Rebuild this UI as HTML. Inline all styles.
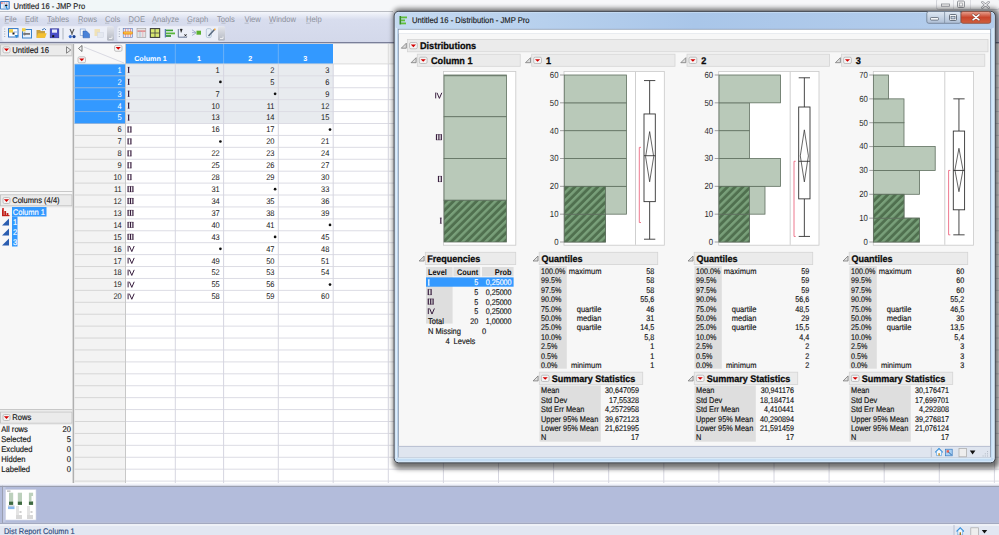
<!DOCTYPE html>
<html><head><meta charset="utf-8"><style>
html,body{margin:0;padding:0;width:999px;height:535px;overflow:hidden;background:#fff}
svg{display:block;font-family:"Liberation Sans",sans-serif;text-rendering:geometricPrecision}
</style></head><body>
<svg width="999" height="535" viewBox="0 0 999 535">
<defs>
<pattern id="hatch" patternUnits="userSpaceOnUse" width="5.4" height="5.4" patternTransform="rotate(45)"><rect width="5.4" height="5.4" fill="#50704f"/><rect x="0" y="0" width="2.5" height="5.4" fill="#79a07a"/></pattern>
<linearGradient id="menubg" x1="0" y1="0" x2="0" y2="1"><stop offset="0" stop-color="#f4f6fb"/><stop offset="0.25" stop-color="#d8ddee"/><stop offset="1" stop-color="#d3d8ea"/></linearGradient>
<linearGradient id="dtitle" x1="0" y1="0" x2="1" y2="0"><stop offset="0" stop-color="#c5daf1"/><stop offset="0.5" stop-color="#a9c6e9"/><stop offset="1" stop-color="#b4cdec"/></linearGradient>
<linearGradient id="closebtn" x1="0" y1="0" x2="0" y2="1"><stop offset="0" stop-color="#e8a493"/><stop offset="0.5" stop-color="#c9452c"/><stop offset="1" stop-color="#d0603f"/></linearGradient>
<linearGradient id="btnbg" x1="0" y1="0" x2="0" y2="1"><stop offset="0" stop-color="#dfe8f3"/><stop offset="1" stop-color="#aebfd6"/></linearGradient>
<filter id="shadow" x="-5%" y="-5%" width="110%" height="110%"><feGaussianBlur stdDeviation="2.5"/></filter>
</defs>
<rect x="0" y="0" width="999" height="535" fill="#ffffff"/>
<rect x="0" y="0" width="999" height="12" fill="#f6f7f9"/>
<rect x="40" y="0" width="120" height="12" fill="#eef6f7" opacity="0.6"/>
<rect x="0" y="1" width="9.8" height="8.6" rx="1" fill="#3f7fc8"/>
<rect x="1" y="2" width="7.6" height="6.6" fill="#dce8f6"/>
<rect x="1.2" y="2.3" width="1.4" height="1.4" fill="#f05a50"/>
<rect x="3.6" y="2.3" width="1.4" height="1.4" fill="#e8a0a8"/>
<rect x="6" y="2.3" width="1.4" height="1.4" fill="#d8b0c8"/>
<rect x="1.2" y="4.6" width="1.4" height="3.6" fill="#f0f4fa"/>
<rect x="3.6" y="4.6" width="1.4" height="3.6" fill="#b8d0ec"/>
<ellipse cx="6.2" cy="5.3" rx="1.3" ry="0.9" fill="#111"/>
<path d="M5 6.5 l2 -0.5 l0.7 4.2 z" fill="#1a8ad8"/>
<text transform="translate(13.5,9.3) scale(0.91,1)" font-size="8.305" fill="#1e1e1e" stroke="#1e1e1e" stroke-width="0.16" text-anchor="start">Untitled 16 - JMP Pro</text>
<rect x="936.5" y="-1" width="63" height="10.5" fill="#f4f5f7" stroke="#c9ccd2" stroke-width="0.8" rx="2"/>
<line x1="953.5" y1="0" x2="953.5" y2="9.5" stroke="#d4d6da" stroke-width="0.8"/>
<line x1="970.5" y1="0" x2="970.5" y2="9.5" stroke="#d4d6da" stroke-width="0.8"/>
<rect x="941.5" y="4" width="8" height="2.2" fill="#fafafa" stroke="#8a8d93" stroke-width="0.8"/>
<rect x="957.5" y="1" width="7" height="6.5" fill="#f0f0f0" stroke="#8a8d93" stroke-width="0.9" rx="1"/>
<rect x="959.5" y="3" width="3" height="3" fill="#fafafa" stroke="#8a8d93" stroke-width="0.6"/>
<path d="M982.3 2.2 L988.7 7.6 M988.7 2.2 L982.3 7.6" stroke="#8a8c92" stroke-width="2.4" stroke-linecap="round"/>
<path d="M982.3 2.2 L988.7 7.6 M988.7 2.2 L982.3 7.6" stroke="#f4f4f6" stroke-width="1.1" stroke-linecap="round"/>
<line x1="0" y1="11.5" x2="393" y2="11.5" stroke="#b9bcc3" stroke-width="1"/>
<rect x="0" y="12" width="999" height="30.5" fill="url(#menubg)"/>
<text transform="translate(4.5,21.6) scale(0.91,1)" font-size="8.36" fill="#8e929c" text-anchor="start">File</text>
<line x1="4.5" y1="23.2" x2="8.8" y2="23.2" stroke="#a0a4ae" stroke-width="0.6"/>
<text transform="translate(25,21.6) scale(0.91,1)" font-size="8.36" fill="#8e929c" text-anchor="start">Edit</text>
<line x1="25" y1="23.2" x2="29.3" y2="23.2" stroke="#a0a4ae" stroke-width="0.6"/>
<text transform="translate(47,21.6) scale(0.91,1)" font-size="8.36" fill="#8e929c" text-anchor="start">Tables</text>
<line x1="47" y1="23.2" x2="51.3" y2="23.2" stroke="#a0a4ae" stroke-width="0.6"/>
<text transform="translate(78,21.6) scale(0.91,1)" font-size="8.36" fill="#8e929c" text-anchor="start">Rows</text>
<line x1="78" y1="23.2" x2="82.3" y2="23.2" stroke="#a0a4ae" stroke-width="0.6"/>
<text transform="translate(105,21.6) scale(0.91,1)" font-size="8.36" fill="#8e929c" text-anchor="start">Cols</text>
<line x1="105" y1="23.2" x2="109.3" y2="23.2" stroke="#a0a4ae" stroke-width="0.6"/>
<text transform="translate(128.5,21.6) scale(0.91,1)" font-size="8.36" fill="#8e929c" text-anchor="start">DOE</text>
<line x1="128.5" y1="23.2" x2="132.8" y2="23.2" stroke="#a0a4ae" stroke-width="0.6"/>
<text transform="translate(152,21.6) scale(0.91,1)" font-size="8.36" fill="#8e929c" text-anchor="start">Analyze</text>
<line x1="152" y1="23.2" x2="156.3" y2="23.2" stroke="#a0a4ae" stroke-width="0.6"/>
<text transform="translate(187,21.6) scale(0.91,1)" font-size="8.36" fill="#8e929c" text-anchor="start">Graph</text>
<line x1="187" y1="23.2" x2="191.3" y2="23.2" stroke="#a0a4ae" stroke-width="0.6"/>
<text transform="translate(217,21.6) scale(0.91,1)" font-size="8.36" fill="#8e929c" text-anchor="start">Tools</text>
<line x1="221.4" y1="23.2" x2="225.6" y2="23.2" stroke="#a0a4ae" stroke-width="0.6"/>
<text transform="translate(244.5,21.6) scale(0.91,1)" font-size="8.36" fill="#8e929c" text-anchor="start">View</text>
<line x1="244.5" y1="23.2" x2="248.8" y2="23.2" stroke="#a0a4ae" stroke-width="0.6"/>
<text transform="translate(269,21.6) scale(0.91,1)" font-size="8.36" fill="#8e929c" text-anchor="start">Window</text>
<line x1="269" y1="23.2" x2="273.3" y2="23.2" stroke="#a0a4ae" stroke-width="0.6"/>
<text transform="translate(306,21.6) scale(0.91,1)" font-size="8.36" fill="#8e929c" text-anchor="start">Help</text>
<line x1="306" y1="23.2" x2="310.3" y2="23.2" stroke="#a0a4ae" stroke-width="0.6"/>
<linearGradient id="ovf" x1="0" y1="0" x2="0" y2="1"><stop offset="0" stop-color="#e4e6ec"/><stop offset="1" stop-color="#b4b8c2"/></linearGradient>
<rect x="1.8" y="25.9" width="112" height="15.3" rx="2.5" fill="#eceff8" stroke="#dde1ee" stroke-width="0.6"/>
<rect x="117" y="25.9" width="108" height="15.3" rx="2.5" fill="#eceff8" stroke="#dde1ee" stroke-width="0.6"/>
<rect x="4.2" y="28.5" width="1" height="1" fill="#a4aab8"/>
<rect x="4.2" y="31" width="1" height="1" fill="#a4aab8"/>
<rect x="4.2" y="33.5" width="1" height="1" fill="#a4aab8"/>
<rect x="4.2" y="36" width="1" height="1" fill="#a4aab8"/>
<rect x="118.8" y="28.5" width="1" height="1" fill="#a4aab8"/>
<rect x="118.8" y="31" width="1" height="1" fill="#a4aab8"/>
<rect x="118.8" y="33.5" width="1" height="1" fill="#a4aab8"/>
<rect x="118.8" y="36" width="1" height="1" fill="#a4aab8"/>
<rect x="107" y="26.2" width="7" height="14.6" rx="1.5" fill="url(#ovf)"/>
<path d="M109 38.5 l3 0 l0 -2" stroke="#f4f4f4" stroke-width="0.9" fill="none"/>
<rect x="218" y="26.2" width="7" height="14.6" rx="1.5" fill="url(#ovf)"/>
<path d="M220 38.5 l3 0 l0 -2" stroke="#f4f4f4" stroke-width="0.9" fill="none"/>
<rect x="8.5" y="28.6" width="9.5" height="8.4" fill="#ffffff" stroke="#2f74c4" stroke-width="1"/>
<rect x="9" y="29.2" width="4" height="3.4" fill="#f0d048"/>
<rect x="13.5" y="31" width="3.5" height="2" fill="#c8d8f0"/>
<rect x="12.5" y="32.5" width="2" height="2" fill="#222"/>
<path d="M14.5 35 l2 3 l2 -3 z" fill="#2a8ad4"/>
<rect x="22.5" y="29.5" width="9" height="8.5" fill="#eaf2fb" stroke="#3a82c8" stroke-width="1"/>
<rect x="22" y="28.2" width="3.6" height="3.2" fill="#f0d048"/>
<rect x="24" y="33" width="6" height="1.8" fill="#777"/>
<circle cx="24.5" cy="34" r="1.4" fill="#777"/>
<path d="M36.5 30 h3.5 l1 1 h4 v6.8 h-8.5 z" fill="#c8a040"/>
<path d="M36.5 37.8 l1.6 -4.6 h8.6 l-1.6 4.6 z" fill="#f4c030"/>
<path d="M42 30 l2.5 -1.5 l1.5 1.5" stroke="#3a6fb0" stroke-width="1" fill="none"/>
<rect x="50.2" y="28.8" width="8.6" height="9" fill="#4a4ec8" stroke="#2a2e90" stroke-width="0.6"/>
<rect x="52" y="29.5" width="5" height="3.2" fill="#e8eaf8"/>
<rect x="52.2" y="35.2" width="2" height="2" fill="#111"/>
<line x1="63" y1="28" x2="63" y2="39.5" stroke="#b7bcc8" stroke-width="1.2"/>
<path d="M70 29 L72.5 34.5 M74 29 L71.5 34.5" stroke="#555" stroke-width="1.1" fill="none"/>
<circle cx="70.3" cy="36.6" r="1.6" fill="#3a6fd0"/><circle cx="74" cy="36.6" r="1.6" fill="#1a3f90"/>
<rect x="80.2" y="29" width="5" height="6.5" fill="#f4f8fc" stroke="#7a9ad0" stroke-width="0.6"/>
<path d="M83 31 h3.5 l3 3 v3.8 h-6.5 z" fill="#4a82d8" stroke="#2a5aa8" stroke-width="0.5"/>
<rect x="94.5" y="29" width="5.5" height="7" fill="#f0e2b8"/>
<rect x="97.5" y="32.5" width="6" height="5" fill="#e4e8f0" stroke="#d0d6e2" stroke-width="0.5"/>
<rect x="123.2" y="28.3" width="9.2" height="9" fill="#dfe8f6" stroke="#5a78b8" stroke-width="0.6"/>
<line x1="125.5" y1="28.5" x2="125.5" y2="37" stroke="#e05050" stroke-width="0.5"/>
<line x1="128.0" y1="28.5" x2="128.0" y2="37" stroke="#e05050" stroke-width="0.5"/>
<line x1="130.5" y1="28.5" x2="130.5" y2="37" stroke="#e05050" stroke-width="0.5"/>
<rect x="122.8" y="31.5" width="10" height="3" rx="1.4" fill="#f08a10"/>
<rect x="124" y="32.3" width="8" height="1.2" fill="#f8d050"/>
<rect x="137" y="28.5" width="8.8" height="9" fill="#e4e4e4" stroke="#9a9a9a" stroke-width="0.6"/>
<rect x="137.5" y="30.5" width="8" height="1.2" fill="#e07070"/>
<line x1="140" y1="31" x2="140" y2="37" stroke="#8ab0d8" stroke-width="0.6"/>
<line x1="142.8" y1="31" x2="142.8" y2="37" stroke="#e8a0b0" stroke-width="0.6"/>
<rect x="150.3" y="28.6" width="9.4" height="8.8" fill="#d8e870" stroke="#333" stroke-width="1"/>
<line x1="155" y1="28.6" x2="155" y2="37.4" stroke="#444" stroke-width="0.8"/>
<line x1="150.3" y1="33" x2="159.7" y2="33" stroke="#444" stroke-width="0.8"/>
<rect x="164.8" y="29" width="1" height="8.5" fill="#3a62a0"/>
<rect x="166" y="29.6" width="7" height="1.6" fill="#3aa030"/>
<rect x="166" y="32.5" width="9" height="1.8" fill="#5ab83a"/>
<rect x="166" y="35.2" width="5" height="1.6" fill="#2a8a2a"/>
<path d="M178.3 29 V37.2 H187" stroke="#5a6a8a" stroke-width="0.9" fill="none"/>
<path d="M180.2 29.3 h2 l-1 2 z M181.2 31 v1.5" stroke="#111" stroke-width="0.7" fill="#111"/>
<path d="M184.5 34.3 l2 2 M186.5 34.3 l-2 2" stroke="#111" stroke-width="0.9"/>
<path d="M192 29.8 L196 32.5 M192 35.5 L196 33 M192 32.6 H196" stroke="#8a9ac0" stroke-width="0.7"/>
<rect x="196.5" y="30.7" width="4.5" height="4" fill="#5ab030"/>
<rect x="206.3" y="28.6" width="5" height="9" rx="1.5" fill="#e8eef6" stroke="#9ab0c8" stroke-width="0.6"/>
<path d="M208.5 36 L214.5 29.5" stroke="#5a6a80" stroke-width="1.5"/>
<rect x="214" y="28.6" width="1.6" height="1.6" fill="#f0a030"/>
<line x1="0" y1="42.5" x2="999" y2="42.5" stroke="#7a7f99" stroke-width="1"/>
<rect x="0" y="43" width="999" height="1.2" fill="#c9ccd6"/>
<rect x="0" y="44" width="72.5" height="439" fill="#f7f7f7"/>
<rect x="0.4" y="44.8" width="71.6" height="10.6" fill="#ebebeb" stroke="#bdbdbd" stroke-width="0.8"/>
<line x1="0" y1="56" x2="72.4" y2="56" stroke="#d4d4d4" stroke-width="1"/>
<rect x="3.0" y="46.8" width="7" height="6" fill="#f4f4f4" stroke="#b4b4b4" stroke-width="0.8" rx="1.5"/>
<path d="M3.9 48.599999999999994 L9.1 48.599999999999994 L6.5 51.3 Z" fill="#d40000"/>
<text transform="translate(12.2,52.8) scale(0.91,1)" font-size="8.47" fill="#161616" stroke="#161616" stroke-width="0.16" text-anchor="start">Untitled 16</text>
<path d="M66.5 46.8 L70.8 50 L66.5 53.2 Z" fill="none" stroke="#6a6a6a" stroke-width="0.8"/>
<line x1="0" y1="191.5" x2="72.5" y2="191.5" stroke="#c8c8c8" stroke-width="1.2"/>
<rect x="0.4" y="194.8" width="71.6" height="11" fill="#ebebeb" stroke="#bdbdbd" stroke-width="0.8"/>
<line x1="0" y1="206.8" x2="72.4" y2="206.8" stroke="#dcdcdc" stroke-width="0.8"/>
<rect x="3.0" y="197.5" width="7" height="6" fill="#f4f4f4" stroke="#b4b4b4" stroke-width="0.8" rx="1.5"/>
<path d="M3.9 199.3 L9.1 199.3 L6.5 202.0 Z" fill="#d40000"/>
<text transform="translate(12.2,202.8) scale(0.91,1)" font-size="8.305" fill="#161616" stroke="#161616" stroke-width="0.16" text-anchor="start">Columns (4/4)</text>
<rect x="12" y="207" width="34.5" height="9.5" fill="#3399ff"/>
<rect x="12" y="216.5" width="5.5" height="30" fill="#3399ff"/>
<text transform="translate(12.8,214.8) scale(0.91,1)" font-size="8.25" fill="#ffffff" stroke="#ffffff" stroke-width="0.16" text-anchor="start">Column 1</text>
<text transform="translate(13.0,224.6) scale(0.91,1)" font-size="8.25" fill="#ffffff" stroke="#ffffff" stroke-width="0.16" text-anchor="start">1</text>
<text transform="translate(13.0,234.54999999999998) scale(0.91,1)" font-size="8.25" fill="#ffffff" stroke="#ffffff" stroke-width="0.16" text-anchor="start">2</text>
<text transform="translate(13.0,244.5) scale(0.91,1)" font-size="8.25" fill="#ffffff" stroke="#ffffff" stroke-width="0.16" text-anchor="start">3</text>
<rect x="2" y="208" width="1.8" height="8" fill="#c0201a"/>
<rect x="4.3" y="211" width="1.8" height="5" fill="#c0201a"/>
<rect x="6.6" y="213" width="1.8" height="3" fill="#c0201a"/>
<rect x="2" y="215" width="7.5" height="1.2" fill="#c0201a"/>
<rect x="2" y="208" width="1.6" height="1.6" fill="#e05050"/>
<path d="M2 225.5 L9 218.5 L9 225.5 Z" fill="#2a5db0"/>
<path d="M2 235.5 L9 228.5 L9 235.5 Z" fill="#2a5db0"/>
<path d="M2 245.5 L9 238.5 L9 245.5 Z" fill="#2a5db0"/>
<line x1="0" y1="409.7" x2="72.5" y2="409.7" stroke="#c8c8c8" stroke-width="1.2"/>
<rect x="0.4" y="412" width="71.6" height="11.2" fill="#ebebeb" stroke="#bdbdbd" stroke-width="0.8"/>
<line x1="0" y1="424" x2="72.4" y2="424" stroke="#dcdcdc" stroke-width="0.8"/>
<rect x="3.0" y="414.5" width="7" height="6" fill="#f4f4f4" stroke="#b4b4b4" stroke-width="0.8" rx="1.5"/>
<path d="M3.9 416.3 L9.1 416.3 L6.5 419.0 Z" fill="#d40000"/>
<text transform="translate(12.2,420.2) scale(0.91,1)" font-size="8.36" fill="#161616" stroke="#161616" stroke-width="0.16" text-anchor="start">Rows</text>
<text transform="translate(1.3,432.0) scale(0.91,1)" font-size="8.36" fill="#161616" stroke="#161616" stroke-width="0.16" text-anchor="start">All rows</text>
<text transform="translate(70.9,432.0) scale(0.91,1)" font-size="8.36" fill="#161616" stroke="#161616" stroke-width="0.16" text-anchor="end">20</text>
<text transform="translate(1.3,442.0) scale(0.91,1)" font-size="8.36" fill="#161616" stroke="#161616" stroke-width="0.16" text-anchor="start">Selected</text>
<text transform="translate(70.9,442.0) scale(0.91,1)" font-size="8.36" fill="#161616" stroke="#161616" stroke-width="0.16" text-anchor="end">5</text>
<text transform="translate(1.3,452.0) scale(0.91,1)" font-size="8.36" fill="#161616" stroke="#161616" stroke-width="0.16" text-anchor="start">Excluded</text>
<text transform="translate(70.9,452.0) scale(0.91,1)" font-size="8.36" fill="#161616" stroke="#161616" stroke-width="0.16" text-anchor="end">0</text>
<text transform="translate(1.3,462.0) scale(0.91,1)" font-size="8.36" fill="#161616" stroke="#161616" stroke-width="0.16" text-anchor="start">Hidden</text>
<text transform="translate(70.9,462.0) scale(0.91,1)" font-size="8.36" fill="#161616" stroke="#161616" stroke-width="0.16" text-anchor="end">0</text>
<text transform="translate(1.3,472.0) scale(0.91,1)" font-size="8.36" fill="#161616" stroke="#161616" stroke-width="0.16" text-anchor="start">Labelled</text>
<text transform="translate(70.9,472.0) scale(0.91,1)" font-size="8.36" fill="#161616" stroke="#161616" stroke-width="0.16" text-anchor="end">0</text>
<rect x="72.4" y="44" width="2.3" height="439" fill="#c4c4c4"/>
<line x1="73.6" y1="44" x2="73.6" y2="483" stroke="#a8a8a8" stroke-width="0.8"/>
<rect x="74.6" y="44" width="924.4" height="439" fill="#ffffff"/>
<rect x="74.6" y="44" width="50.900000000000006" height="439" fill="#f3f3f3"/>
<rect x="74.6" y="44" width="50.900000000000006" height="20" fill="#f8f8f8"/>
<line x1="84" y1="47" x2="124" y2="63" stroke="#d0d0dc" stroke-width="0.8"/>
<path d="M82 45.5 L78.5 48.5 L82 51.5 Z" fill="none" stroke="#555" stroke-width="0.8"/>
<rect x="114.5" y="45.3" width="7.5" height="6" fill="#f4f4f4" stroke="#b4b4b4" stroke-width="0.8" rx="1.5"/>
<path d="M115.65 47.099999999999994 L120.85 47.099999999999994 L118.25 49.8 Z" fill="#d40000"/>
<rect x="78.0" y="56.8" width="7.5" height="6" fill="#f4f4f4" stroke="#b4b4b4" stroke-width="0.8" rx="1.5"/>
<path d="M79.15 58.599999999999994 L84.35 58.599999999999994 L81.75 61.3 Z" fill="#d40000"/>
<rect x="125.5" y="44" width="207.5" height="20" fill="#3399ff"/>
<line x1="175.3" y1="44" x2="175.3" y2="64" stroke="#7ab8f5" stroke-width="0.8"/>
<line x1="223.6" y1="44" x2="223.6" y2="64" stroke="#7ab8f5" stroke-width="0.8"/>
<line x1="278.3" y1="44" x2="278.3" y2="64" stroke="#7ab8f5" stroke-width="0.8"/>
<text transform="translate(150.5,61.3) scale(1.0,1)" font-size="7.2" font-weight="bold" fill="#ffffff" text-anchor="middle">Column 1</text>
<text transform="translate(198.9,61.3) scale(1.0,1)" font-size="7.2" font-weight="bold" fill="#ffffff" text-anchor="middle">1</text>
<text transform="translate(250.3,61.3) scale(1.0,1)" font-size="7.2" font-weight="bold" fill="#ffffff" text-anchor="middle">2</text>
<text transform="translate(305.3,61.3) scale(1.0,1)" font-size="7.2" font-weight="bold" fill="#ffffff" text-anchor="middle">3</text>
<rect x="333.2" y="44" width="665.8" height="20" fill="#f6f6f6"/>
<rect x="125.5" y="64.0" width="207.7" height="59.6" fill="#e8ebef"/>
<rect x="74.6" y="64.0" width="50.900000000000006" height="59.6" fill="#3399ff"/>
<line x1="74.6" y1="75.82000000000001" x2="125.5" y2="75.82000000000001" stroke="#8fb3dd" stroke-width="1"/>
<line x1="125.5" y1="75.82000000000001" x2="999" y2="75.82000000000001" stroke="#dcdce4" stroke-width="1"/>
<line x1="74.6" y1="87.74000000000001" x2="125.5" y2="87.74000000000001" stroke="#8fb3dd" stroke-width="1"/>
<line x1="125.5" y1="87.74000000000001" x2="999" y2="87.74000000000001" stroke="#dcdce4" stroke-width="1"/>
<line x1="74.6" y1="99.66" x2="125.5" y2="99.66" stroke="#8fb3dd" stroke-width="1"/>
<line x1="125.5" y1="99.66" x2="999" y2="99.66" stroke="#dcdce4" stroke-width="1"/>
<line x1="74.6" y1="111.58000000000001" x2="125.5" y2="111.58000000000001" stroke="#8fb3dd" stroke-width="1"/>
<line x1="125.5" y1="111.58000000000001" x2="999" y2="111.58000000000001" stroke="#dcdce4" stroke-width="1"/>
<line x1="74.6" y1="123.5" x2="125.5" y2="123.5" stroke="#8fb3dd" stroke-width="1"/>
<line x1="125.5" y1="123.5" x2="999" y2="123.5" stroke="#dcdce4" stroke-width="1"/>
<line x1="74.6" y1="135.42" x2="125.5" y2="135.42" stroke="#d6d6d6" stroke-width="1"/>
<line x1="125.5" y1="135.42" x2="999" y2="135.42" stroke="#dcdce4" stroke-width="1"/>
<line x1="74.6" y1="147.34" x2="125.5" y2="147.34" stroke="#d6d6d6" stroke-width="1"/>
<line x1="125.5" y1="147.34" x2="999" y2="147.34" stroke="#dcdce4" stroke-width="1"/>
<line x1="74.6" y1="159.26000000000002" x2="125.5" y2="159.26000000000002" stroke="#d6d6d6" stroke-width="1"/>
<line x1="125.5" y1="159.26000000000002" x2="999" y2="159.26000000000002" stroke="#dcdce4" stroke-width="1"/>
<line x1="74.6" y1="171.18" x2="125.5" y2="171.18" stroke="#d6d6d6" stroke-width="1"/>
<line x1="125.5" y1="171.18" x2="999" y2="171.18" stroke="#dcdce4" stroke-width="1"/>
<line x1="74.6" y1="183.1" x2="125.5" y2="183.1" stroke="#d6d6d6" stroke-width="1"/>
<line x1="125.5" y1="183.1" x2="999" y2="183.1" stroke="#dcdce4" stroke-width="1"/>
<line x1="74.6" y1="195.02" x2="125.5" y2="195.02" stroke="#d6d6d6" stroke-width="1"/>
<line x1="125.5" y1="195.02" x2="999" y2="195.02" stroke="#dcdce4" stroke-width="1"/>
<line x1="74.6" y1="206.94" x2="125.5" y2="206.94" stroke="#d6d6d6" stroke-width="1"/>
<line x1="125.5" y1="206.94" x2="999" y2="206.94" stroke="#dcdce4" stroke-width="1"/>
<line x1="74.6" y1="218.86" x2="125.5" y2="218.86" stroke="#d6d6d6" stroke-width="1"/>
<line x1="125.5" y1="218.86" x2="999" y2="218.86" stroke="#dcdce4" stroke-width="1"/>
<line x1="74.6" y1="230.78" x2="125.5" y2="230.78" stroke="#d6d6d6" stroke-width="1"/>
<line x1="125.5" y1="230.78" x2="999" y2="230.78" stroke="#dcdce4" stroke-width="1"/>
<line x1="74.6" y1="242.70000000000002" x2="125.5" y2="242.70000000000002" stroke="#d6d6d6" stroke-width="1"/>
<line x1="125.5" y1="242.70000000000002" x2="999" y2="242.70000000000002" stroke="#dcdce4" stroke-width="1"/>
<line x1="74.6" y1="254.62" x2="125.5" y2="254.62" stroke="#d6d6d6" stroke-width="1"/>
<line x1="125.5" y1="254.62" x2="999" y2="254.62" stroke="#dcdce4" stroke-width="1"/>
<line x1="74.6" y1="266.53999999999996" x2="125.5" y2="266.53999999999996" stroke="#d6d6d6" stroke-width="1"/>
<line x1="125.5" y1="266.53999999999996" x2="999" y2="266.53999999999996" stroke="#dcdce4" stroke-width="1"/>
<line x1="74.6" y1="278.46" x2="125.5" y2="278.46" stroke="#d6d6d6" stroke-width="1"/>
<line x1="125.5" y1="278.46" x2="999" y2="278.46" stroke="#dcdce4" stroke-width="1"/>
<line x1="74.6" y1="290.38" x2="125.5" y2="290.38" stroke="#d6d6d6" stroke-width="1"/>
<line x1="125.5" y1="290.38" x2="999" y2="290.38" stroke="#dcdce4" stroke-width="1"/>
<line x1="74.6" y1="302.29999999999995" x2="125.5" y2="302.29999999999995" stroke="#d6d6d6" stroke-width="1"/>
<line x1="125.5" y1="302.29999999999995" x2="999" y2="302.29999999999995" stroke="#dcdce4" stroke-width="1"/>
<line x1="74.6" y1="314.21999999999997" x2="125.5" y2="314.21999999999997" stroke="#d6d6d6" stroke-width="1"/>
<line x1="125.5" y1="314.21999999999997" x2="999" y2="314.21999999999997" stroke="#dcdce4" stroke-width="1"/>
<line x1="74.6" y1="326.14" x2="125.5" y2="326.14" stroke="#d6d6d6" stroke-width="1"/>
<line x1="125.5" y1="326.14" x2="999" y2="326.14" stroke="#dcdce4" stroke-width="1"/>
<line x1="74.6" y1="338.06" x2="125.5" y2="338.06" stroke="#d6d6d6" stroke-width="1"/>
<line x1="125.5" y1="338.06" x2="999" y2="338.06" stroke="#dcdce4" stroke-width="1"/>
<line x1="74.6" y1="349.97999999999996" x2="125.5" y2="349.97999999999996" stroke="#d6d6d6" stroke-width="1"/>
<line x1="125.5" y1="349.97999999999996" x2="999" y2="349.97999999999996" stroke="#dcdce4" stroke-width="1"/>
<line x1="74.6" y1="361.9" x2="125.5" y2="361.9" stroke="#d6d6d6" stroke-width="1"/>
<line x1="125.5" y1="361.9" x2="999" y2="361.9" stroke="#dcdce4" stroke-width="1"/>
<line x1="74.6" y1="373.82" x2="125.5" y2="373.82" stroke="#d6d6d6" stroke-width="1"/>
<line x1="125.5" y1="373.82" x2="999" y2="373.82" stroke="#dcdce4" stroke-width="1"/>
<line x1="74.6" y1="385.73999999999995" x2="125.5" y2="385.73999999999995" stroke="#d6d6d6" stroke-width="1"/>
<line x1="125.5" y1="385.73999999999995" x2="999" y2="385.73999999999995" stroke="#dcdce4" stroke-width="1"/>
<line x1="74.6" y1="397.65999999999997" x2="125.5" y2="397.65999999999997" stroke="#d6d6d6" stroke-width="1"/>
<line x1="125.5" y1="397.65999999999997" x2="999" y2="397.65999999999997" stroke="#dcdce4" stroke-width="1"/>
<line x1="74.6" y1="409.58" x2="125.5" y2="409.58" stroke="#d6d6d6" stroke-width="1"/>
<line x1="125.5" y1="409.58" x2="999" y2="409.58" stroke="#dcdce4" stroke-width="1"/>
<line x1="74.6" y1="421.5" x2="125.5" y2="421.5" stroke="#d6d6d6" stroke-width="1"/>
<line x1="125.5" y1="421.5" x2="999" y2="421.5" stroke="#dcdce4" stroke-width="1"/>
<line x1="74.6" y1="433.41999999999996" x2="125.5" y2="433.41999999999996" stroke="#d6d6d6" stroke-width="1"/>
<line x1="125.5" y1="433.41999999999996" x2="999" y2="433.41999999999996" stroke="#dcdce4" stroke-width="1"/>
<line x1="74.6" y1="445.34" x2="125.5" y2="445.34" stroke="#d6d6d6" stroke-width="1"/>
<line x1="125.5" y1="445.34" x2="999" y2="445.34" stroke="#dcdce4" stroke-width="1"/>
<line x1="74.6" y1="457.26" x2="125.5" y2="457.26" stroke="#d6d6d6" stroke-width="1"/>
<line x1="125.5" y1="457.26" x2="999" y2="457.26" stroke="#dcdce4" stroke-width="1"/>
<line x1="74.6" y1="469.17999999999995" x2="125.5" y2="469.17999999999995" stroke="#d6d6d6" stroke-width="1"/>
<line x1="125.5" y1="469.17999999999995" x2="999" y2="469.17999999999995" stroke="#dcdce4" stroke-width="1"/>
<line x1="74.6" y1="481.09999999999997" x2="125.5" y2="481.09999999999997" stroke="#d6d6d6" stroke-width="1"/>
<line x1="125.5" y1="481.09999999999997" x2="999" y2="481.09999999999997" stroke="#dcdce4" stroke-width="1"/>
<line x1="74.6" y1="63.9" x2="999" y2="63.9" stroke="#d8d8d8" stroke-width="0.9"/>
<line x1="125.5" y1="64" x2="125.5" y2="483" stroke="#d6d6e0" stroke-width="1"/>
<line x1="175.3" y1="64" x2="175.3" y2="483" stroke="#d6d6e0" stroke-width="1"/>
<line x1="223.6" y1="64" x2="223.6" y2="483" stroke="#d6d6e0" stroke-width="1"/>
<line x1="278.3" y1="64" x2="278.3" y2="483" stroke="#d6d6e0" stroke-width="1"/>
<line x1="333.2" y1="64" x2="333.2" y2="483" stroke="#d6d6e0" stroke-width="1"/>
<line x1="388.3" y1="64" x2="388.3" y2="483" stroke="#d6d6e0" stroke-width="1"/>
<line x1="443.4" y1="64" x2="443.4" y2="483" stroke="#d6d6e0" stroke-width="1"/>
<line x1="498.5" y1="64" x2="498.5" y2="483" stroke="#d6d6e0" stroke-width="1"/>
<line x1="553.6" y1="64" x2="553.6" y2="483" stroke="#d6d6e0" stroke-width="1"/>
<line x1="608.7" y1="64" x2="608.7" y2="483" stroke="#d6d6e0" stroke-width="1"/>
<line x1="663.8" y1="64" x2="663.8" y2="483" stroke="#d6d6e0" stroke-width="1"/>
<line x1="718.9" y1="64" x2="718.9" y2="483" stroke="#d6d6e0" stroke-width="1"/>
<line x1="774.0" y1="64" x2="774.0" y2="483" stroke="#d6d6e0" stroke-width="1"/>
<line x1="829.1" y1="64" x2="829.1" y2="483" stroke="#d6d6e0" stroke-width="1"/>
<line x1="884.2" y1="64" x2="884.2" y2="483" stroke="#d6d6e0" stroke-width="1"/>
<line x1="939.3" y1="64" x2="939.3" y2="483" stroke="#d6d6e0" stroke-width="1"/>
<line x1="994.4000000000001" y1="64" x2="994.4000000000001" y2="483" stroke="#d6d6e0" stroke-width="1"/>
<line x1="388.3" y1="44" x2="388.3" y2="64" stroke="#dedede" stroke-width="1"/>
<line x1="443.4" y1="44" x2="443.4" y2="64" stroke="#dedede" stroke-width="1"/>
<line x1="498.5" y1="44" x2="498.5" y2="64" stroke="#dedede" stroke-width="1"/>
<line x1="553.6" y1="44" x2="553.6" y2="64" stroke="#dedede" stroke-width="1"/>
<line x1="608.7" y1="44" x2="608.7" y2="64" stroke="#dedede" stroke-width="1"/>
<line x1="663.8" y1="44" x2="663.8" y2="64" stroke="#dedede" stroke-width="1"/>
<line x1="718.9" y1="44" x2="718.9" y2="64" stroke="#dedede" stroke-width="1"/>
<line x1="774.0" y1="44" x2="774.0" y2="64" stroke="#dedede" stroke-width="1"/>
<line x1="829.1" y1="44" x2="829.1" y2="64" stroke="#dedede" stroke-width="1"/>
<line x1="884.2" y1="44" x2="884.2" y2="64" stroke="#dedede" stroke-width="1"/>
<line x1="939.3" y1="44" x2="939.3" y2="64" stroke="#dedede" stroke-width="1"/>
<line x1="994.4000000000001" y1="44" x2="994.4000000000001" y2="64" stroke="#dedede" stroke-width="1"/>
<line x1="125.5" y1="44" x2="125.5" y2="483" stroke="#c8c8c8" stroke-width="1"/>
<text transform="translate(121.8,72.8) scale(0.91,1)" font-size="8.25" fill="#ffffff" text-anchor="end">1</text>
<path d="M128.60 67.00 V72.80" stroke="#3a2040" stroke-width="1.2" fill="none"/>
<path d="M127.60 67.25 H129.60 M127.60 72.55 H129.60" stroke="#3a2040" stroke-width="0.6" opacity="0.8" fill="none"/>
<text transform="translate(219.79999999999998,72.8) scale(0.91,1)" font-size="8.25" fill="#161616" text-anchor="end">1</text>
<text transform="translate(274.5,72.8) scale(0.91,1)" font-size="8.25" fill="#161616" text-anchor="end">2</text>
<text transform="translate(329.4,72.8) scale(0.91,1)" font-size="8.25" fill="#161616" text-anchor="end">3</text>
<text transform="translate(121.8,84.72) scale(0.91,1)" font-size="8.25" fill="#ffffff" text-anchor="end">2</text>
<path d="M128.60 78.92 V84.72" stroke="#3a2040" stroke-width="1.2" fill="none"/>
<path d="M127.60 79.17 H129.60 M127.60 84.47 H129.60" stroke="#3a2040" stroke-width="0.6" opacity="0.8" fill="none"/>
<circle cx="220.39999999999998" cy="81.92" r="1.35" fill="#111"/>
<text transform="translate(274.5,84.72) scale(0.91,1)" font-size="8.25" fill="#161616" text-anchor="end">5</text>
<text transform="translate(329.4,84.72) scale(0.91,1)" font-size="8.25" fill="#161616" text-anchor="end">6</text>
<text transform="translate(121.8,96.64) scale(0.91,1)" font-size="8.25" fill="#ffffff" text-anchor="end">3</text>
<path d="M128.60 90.84 V96.64" stroke="#3a2040" stroke-width="1.2" fill="none"/>
<path d="M127.60 91.09 H129.60 M127.60 96.39 H129.60" stroke="#3a2040" stroke-width="0.6" opacity="0.8" fill="none"/>
<text transform="translate(219.79999999999998,96.64) scale(0.91,1)" font-size="8.25" fill="#161616" text-anchor="end">7</text>
<circle cx="275.1" cy="93.84" r="1.35" fill="#111"/>
<text transform="translate(329.4,96.64) scale(0.91,1)" font-size="8.25" fill="#161616" text-anchor="end">9</text>
<text transform="translate(121.8,108.55999999999999) scale(0.91,1)" font-size="8.25" fill="#ffffff" text-anchor="end">4</text>
<path d="M128.60 102.76 V108.56" stroke="#3a2040" stroke-width="1.2" fill="none"/>
<path d="M127.60 103.01 H129.60 M127.60 108.31 H129.60" stroke="#3a2040" stroke-width="0.6" opacity="0.8" fill="none"/>
<text transform="translate(219.79999999999998,108.55999999999999) scale(0.91,1)" font-size="8.25" fill="#161616" text-anchor="end">10</text>
<text transform="translate(274.5,108.55999999999999) scale(0.91,1)" font-size="8.25" fill="#161616" text-anchor="end">11</text>
<text transform="translate(329.4,108.55999999999999) scale(0.91,1)" font-size="8.25" fill="#161616" text-anchor="end">12</text>
<text transform="translate(121.8,120.48) scale(0.91,1)" font-size="8.25" fill="#ffffff" text-anchor="end">5</text>
<path d="M128.60 114.68 V120.48" stroke="#3a2040" stroke-width="1.2" fill="none"/>
<path d="M127.60 114.93 H129.60 M127.60 120.23 H129.60" stroke="#3a2040" stroke-width="0.6" opacity="0.8" fill="none"/>
<text transform="translate(219.79999999999998,120.48) scale(0.91,1)" font-size="8.25" fill="#161616" text-anchor="end">13</text>
<text transform="translate(274.5,120.48) scale(0.91,1)" font-size="8.25" fill="#161616" text-anchor="end">14</text>
<text transform="translate(329.4,120.48) scale(0.91,1)" font-size="8.25" fill="#161616" text-anchor="end">15</text>
<text transform="translate(121.8,132.4) scale(0.91,1)" font-size="8.25" fill="#1a1a1a" text-anchor="end">6</text>
<path d="M128.10 126.60 V132.40 M130.90 126.60 V132.40" stroke="#3a2040" stroke-width="1.2" fill="none"/>
<path d="M127.60 126.85 H131.40 M127.60 132.15 H131.40" stroke="#3a2040" stroke-width="0.6" opacity="0.8" fill="none"/>
<text transform="translate(219.79999999999998,132.4) scale(0.91,1)" font-size="8.25" fill="#161616" text-anchor="end">16</text>
<text transform="translate(274.5,132.4) scale(0.91,1)" font-size="8.25" fill="#161616" text-anchor="end">17</text>
<circle cx="330.0" cy="129.6" r="1.35" fill="#111"/>
<text transform="translate(121.8,144.32) scale(0.91,1)" font-size="8.25" fill="#1a1a1a" text-anchor="end">7</text>
<path d="M128.10 138.52 V144.32 M130.90 138.52 V144.32" stroke="#3a2040" stroke-width="1.2" fill="none"/>
<path d="M127.60 138.77 H131.40 M127.60 144.07 H131.40" stroke="#3a2040" stroke-width="0.6" opacity="0.8" fill="none"/>
<circle cx="220.39999999999998" cy="141.51999999999998" r="1.35" fill="#111"/>
<text transform="translate(274.5,144.32) scale(0.91,1)" font-size="8.25" fill="#161616" text-anchor="end">20</text>
<text transform="translate(329.4,144.32) scale(0.91,1)" font-size="8.25" fill="#161616" text-anchor="end">21</text>
<text transform="translate(121.8,156.24) scale(0.91,1)" font-size="8.25" fill="#1a1a1a" text-anchor="end">8</text>
<path d="M128.10 150.44 V156.24 M130.90 150.44 V156.24" stroke="#3a2040" stroke-width="1.2" fill="none"/>
<path d="M127.60 150.69 H131.40 M127.60 155.99 H131.40" stroke="#3a2040" stroke-width="0.6" opacity="0.8" fill="none"/>
<text transform="translate(219.79999999999998,156.24) scale(0.91,1)" font-size="8.25" fill="#161616" text-anchor="end">22</text>
<text transform="translate(274.5,156.24) scale(0.91,1)" font-size="8.25" fill="#161616" text-anchor="end">23</text>
<text transform="translate(329.4,156.24) scale(0.91,1)" font-size="8.25" fill="#161616" text-anchor="end">24</text>
<text transform="translate(121.8,168.16000000000003) scale(0.91,1)" font-size="8.25" fill="#1a1a1a" text-anchor="end">9</text>
<path d="M128.10 162.36 V168.16 M130.90 162.36 V168.16" stroke="#3a2040" stroke-width="1.2" fill="none"/>
<path d="M127.60 162.61 H131.40 M127.60 167.91 H131.40" stroke="#3a2040" stroke-width="0.6" opacity="0.8" fill="none"/>
<text transform="translate(219.79999999999998,168.16000000000003) scale(0.91,1)" font-size="8.25" fill="#161616" text-anchor="end">25</text>
<text transform="translate(274.5,168.16000000000003) scale(0.91,1)" font-size="8.25" fill="#161616" text-anchor="end">26</text>
<text transform="translate(329.4,168.16000000000003) scale(0.91,1)" font-size="8.25" fill="#161616" text-anchor="end">27</text>
<text transform="translate(121.8,180.08) scale(0.91,1)" font-size="8.25" fill="#1a1a1a" text-anchor="end">10</text>
<path d="M128.10 174.28 V180.08 M130.90 174.28 V180.08" stroke="#3a2040" stroke-width="1.2" fill="none"/>
<path d="M127.60 174.53 H131.40 M127.60 179.83 H131.40" stroke="#3a2040" stroke-width="0.6" opacity="0.8" fill="none"/>
<text transform="translate(219.79999999999998,180.08) scale(0.91,1)" font-size="8.25" fill="#161616" text-anchor="end">28</text>
<text transform="translate(274.5,180.08) scale(0.91,1)" font-size="8.25" fill="#161616" text-anchor="end">29</text>
<text transform="translate(329.4,180.08) scale(0.91,1)" font-size="8.25" fill="#161616" text-anchor="end">30</text>
<text transform="translate(121.8,192.0) scale(0.91,1)" font-size="8.25" fill="#1a1a1a" text-anchor="end">11</text>
<path d="M128.10 186.20 V192.00 M130.50 186.20 V192.00 M132.90 186.20 V192.00" stroke="#3a2040" stroke-width="1.2" fill="none"/>
<path d="M127.60 186.45 H133.40 M127.60 191.75 H133.40" stroke="#3a2040" stroke-width="0.6" opacity="0.8" fill="none"/>
<text transform="translate(219.79999999999998,192.0) scale(0.91,1)" font-size="8.25" fill="#161616" text-anchor="end">31</text>
<circle cx="275.1" cy="189.2" r="1.35" fill="#111"/>
<text transform="translate(329.4,192.0) scale(0.91,1)" font-size="8.25" fill="#161616" text-anchor="end">33</text>
<text transform="translate(121.8,203.92000000000002) scale(0.91,1)" font-size="8.25" fill="#1a1a1a" text-anchor="end">12</text>
<path d="M128.10 198.12 V203.92 M130.50 198.12 V203.92 M132.90 198.12 V203.92" stroke="#3a2040" stroke-width="1.2" fill="none"/>
<path d="M127.60 198.37 H133.40 M127.60 203.67 H133.40" stroke="#3a2040" stroke-width="0.6" opacity="0.8" fill="none"/>
<text transform="translate(219.79999999999998,203.92000000000002) scale(0.91,1)" font-size="8.25" fill="#161616" text-anchor="end">34</text>
<text transform="translate(274.5,203.92000000000002) scale(0.91,1)" font-size="8.25" fill="#161616" text-anchor="end">35</text>
<text transform="translate(329.4,203.92000000000002) scale(0.91,1)" font-size="8.25" fill="#161616" text-anchor="end">36</text>
<text transform="translate(121.8,215.84) scale(0.91,1)" font-size="8.25" fill="#1a1a1a" text-anchor="end">13</text>
<path d="M128.10 210.04 V215.84 M130.50 210.04 V215.84 M132.90 210.04 V215.84" stroke="#3a2040" stroke-width="1.2" fill="none"/>
<path d="M127.60 210.29 H133.40 M127.60 215.59 H133.40" stroke="#3a2040" stroke-width="0.6" opacity="0.8" fill="none"/>
<text transform="translate(219.79999999999998,215.84) scale(0.91,1)" font-size="8.25" fill="#161616" text-anchor="end">37</text>
<text transform="translate(274.5,215.84) scale(0.91,1)" font-size="8.25" fill="#161616" text-anchor="end">38</text>
<text transform="translate(329.4,215.84) scale(0.91,1)" font-size="8.25" fill="#161616" text-anchor="end">39</text>
<text transform="translate(121.8,227.76000000000002) scale(0.91,1)" font-size="8.25" fill="#1a1a1a" text-anchor="end">14</text>
<path d="M128.10 221.96 V227.76 M130.50 221.96 V227.76 M132.90 221.96 V227.76" stroke="#3a2040" stroke-width="1.2" fill="none"/>
<path d="M127.60 222.21 H133.40 M127.60 227.51 H133.40" stroke="#3a2040" stroke-width="0.6" opacity="0.8" fill="none"/>
<text transform="translate(219.79999999999998,227.76000000000002) scale(0.91,1)" font-size="8.25" fill="#161616" text-anchor="end">40</text>
<text transform="translate(274.5,227.76000000000002) scale(0.91,1)" font-size="8.25" fill="#161616" text-anchor="end">41</text>
<circle cx="330.0" cy="224.96" r="1.35" fill="#111"/>
<text transform="translate(121.8,239.68) scale(0.91,1)" font-size="8.25" fill="#1a1a1a" text-anchor="end">15</text>
<path d="M128.10 233.88 V239.68 M130.50 233.88 V239.68 M132.90 233.88 V239.68" stroke="#3a2040" stroke-width="1.2" fill="none"/>
<path d="M127.60 234.13 H133.40 M127.60 239.43 H133.40" stroke="#3a2040" stroke-width="0.6" opacity="0.8" fill="none"/>
<text transform="translate(219.79999999999998,239.68) scale(0.91,1)" font-size="8.25" fill="#161616" text-anchor="end">43</text>
<circle cx="275.1" cy="236.88" r="1.35" fill="#111"/>
<text transform="translate(329.4,239.68) scale(0.91,1)" font-size="8.25" fill="#161616" text-anchor="end">45</text>
<text transform="translate(121.8,251.60000000000002) scale(0.91,1)" font-size="8.25" fill="#1a1a1a" text-anchor="end">16</text>
<path d="M128.10 245.80 V251.60 M129.40 246.00 L131.80 251.60 L134.20 246.00" stroke="#3a2040" stroke-width="1.0" fill="none"/>
<circle cx="220.39999999999998" cy="248.8" r="1.35" fill="#111"/>
<text transform="translate(274.5,251.60000000000002) scale(0.91,1)" font-size="8.25" fill="#161616" text-anchor="end">47</text>
<text transform="translate(329.4,251.60000000000002) scale(0.91,1)" font-size="8.25" fill="#161616" text-anchor="end">48</text>
<text transform="translate(121.8,263.52) scale(0.91,1)" font-size="8.25" fill="#1a1a1a" text-anchor="end">17</text>
<path d="M128.10 257.72 V263.52 M129.40 257.92 L131.80 263.52 L134.20 257.92" stroke="#3a2040" stroke-width="1.0" fill="none"/>
<text transform="translate(219.79999999999998,263.52) scale(0.91,1)" font-size="8.25" fill="#161616" text-anchor="end">49</text>
<text transform="translate(274.5,263.52) scale(0.91,1)" font-size="8.25" fill="#161616" text-anchor="end">50</text>
<text transform="translate(329.4,263.52) scale(0.91,1)" font-size="8.25" fill="#161616" text-anchor="end">51</text>
<text transform="translate(121.8,275.44) scale(0.91,1)" font-size="8.25" fill="#1a1a1a" text-anchor="end">18</text>
<path d="M128.10 269.64 V275.44 M129.40 269.84 L131.80 275.44 L134.20 269.84" stroke="#3a2040" stroke-width="1.0" fill="none"/>
<text transform="translate(219.79999999999998,275.44) scale(0.91,1)" font-size="8.25" fill="#161616" text-anchor="end">52</text>
<text transform="translate(274.5,275.44) scale(0.91,1)" font-size="8.25" fill="#161616" text-anchor="end">53</text>
<text transform="translate(329.4,275.44) scale(0.91,1)" font-size="8.25" fill="#161616" text-anchor="end">54</text>
<text transform="translate(121.8,287.36) scale(0.91,1)" font-size="8.25" fill="#1a1a1a" text-anchor="end">19</text>
<path d="M128.10 281.56 V287.36 M129.40 281.76 L131.80 287.36 L134.20 281.76" stroke="#3a2040" stroke-width="1.0" fill="none"/>
<text transform="translate(219.79999999999998,287.36) scale(0.91,1)" font-size="8.25" fill="#161616" text-anchor="end">55</text>
<text transform="translate(274.5,287.36) scale(0.91,1)" font-size="8.25" fill="#161616" text-anchor="end">56</text>
<circle cx="330.0" cy="284.56" r="1.35" fill="#111"/>
<text transform="translate(121.8,299.28000000000003) scale(0.91,1)" font-size="8.25" fill="#1a1a1a" text-anchor="end">20</text>
<path d="M128.10 293.48 V299.28 M129.40 293.68 L131.80 299.28 L134.20 293.68" stroke="#3a2040" stroke-width="1.0" fill="none"/>
<text transform="translate(219.79999999999998,299.28000000000003) scale(0.91,1)" font-size="8.25" fill="#161616" text-anchor="end">58</text>
<text transform="translate(274.5,299.28000000000003) scale(0.91,1)" font-size="8.25" fill="#161616" text-anchor="end">59</text>
<text transform="translate(329.4,299.28000000000003) scale(0.91,1)" font-size="8.25" fill="#161616" text-anchor="end">60</text>
<rect x="393.2" y="8.4" width="606.0" height="460.40000000000003" rx="6" fill="#000" opacity="0.55" filter="url(#shadow)"/>
<rect x="394.2" y="11.4" width="601.0" height="451.40000000000003" rx="4.5" fill="#c2dcf4" stroke="#3a3f48" stroke-width="1"/>
<rect x="395.2" y="12.4" width="599.0" height="449.40000000000003" rx="3.5" fill="none" stroke="#eef6fd" stroke-width="0.7" opacity="0.8"/>
<rect x="395.2" y="12.4" width="599.0" height="16.5" fill="url(#dtitle)" rx="3.5"/>
<line x1="396.4" y1="28" x2="396.4" y2="458" stroke="#e6f2fc" stroke-width="0.9"/>
<line x1="993.0" y1="28" x2="993.0" y2="458" stroke="#e6f2fc" stroke-width="0.9"/>
<rect x="399.5" y="16" width="1.6" height="8.5" fill="#3a8a2a"/>
<rect x="401" y="16.5" width="6" height="1.8" fill="#5fbf3a"/>
<rect x="401" y="19.5" width="4" height="1.8" fill="#5fbf3a"/>
<rect x="401" y="22.5" width="5" height="1.8" fill="#5fbf3a"/>
<text transform="translate(412,23.2) scale(0.91,1)" font-size="8.415" fill="#1a1a1a" stroke="#1a1a1a" stroke-width="0.16" text-anchor="start">Untitled 16 - Distribution - JMP Pro</text>
<rect x="926.8" y="11.5" width="34.2" height="11.8" rx="2" fill="url(#btnbg)" stroke="#6b7a8e" stroke-width="0.8"/>
<line x1="944.6" y1="12" x2="944.6" y2="23" stroke="#7f8ea2" stroke-width="0.8"/>
<rect x="930.5" y="17.5" width="8" height="2.6" fill="#f4f6f8" stroke="#4a5463" stroke-width="0.7" rx="0.8"/>
<rect x="949.5" y="14.5" width="7" height="6" fill="#f4f6f8" stroke="#4a5463" stroke-width="0.8" rx="1"/>
<rect x="951" y="16.3" width="4" height="2.6" fill="#c8d4e4" stroke="#4a5463" stroke-width="0.6"/>
<rect x="961" y="11.5" width="29.7" height="11.8" rx="2" fill="url(#closebtn)" stroke="#8a4a3a" stroke-width="0.8"/>
<path d="M973 14.8 L979 19.8 M979 14.8 L973 19.8" stroke="#6a3a30" stroke-width="2.6" stroke-linecap="round" opacity="0.8"/>
<path d="M973 14.8 L979 19.8 M979 14.8 L973 19.8" stroke="#ffffff" stroke-width="1.5" stroke-linecap="round"/>
<rect x="398.3" y="29.3" width="592.3" height="428.3" fill="#f7f7f7" stroke="#7d8ea5" stroke-width="0.8"/>
<line x1="398" y1="458.0" x2="991" y2="458.0" stroke="#f4f8fc" stroke-width="0.9"/>
<rect x="398.8" y="29.8" width="591.3" height="3.5" fill="#ffffff"/>
<line x1="398.8" y1="33.5" x2="990" y2="33.5" stroke="#e4e8ee" stroke-width="0.8"/>
<rect x="398.8" y="446.4" width="591.3" height="11" fill="#dfe5ef"/>
<line x1="398.8" y1="446.4" x2="990" y2="446.4" stroke="#b7bfd1" stroke-width="1"/>
<line x1="931.3" y1="447.5" x2="931.3" y2="457" stroke="#b0b8c8" stroke-width="0.8"/>
<path d="M935.3 452.3 L939 448.6 L942.7 452.3" fill="none" stroke="#2a8ad8" stroke-width="1.1"/>
<path d="M936.5 451.5 V455.6 H941.5 V451.5 L939 449.2 Z" fill="#f4f8fc" stroke="#4a9ae0" stroke-width="0.6"/>
<rect x="938.4" y="453.2" width="1.4" height="2.4" fill="#c08a20"/>
<rect x="945.6" y="449.2" width="6.6" height="6.6" fill="#a8d0f4" stroke="#3a7ac0" stroke-width="0.7"/>
<rect x="946.6" y="450.2" width="2.4" height="2.4" fill="#e86050"/>
<path d="M948.5 452 L951.5 455" stroke="#1a5aa0" stroke-width="0.9"/>
<rect x="959" y="448.6" width="7.6" height="8.2" fill="#eeeeee" stroke="#a8a8a8" stroke-width="0.7"/>
<path d="M969.8 450.6 L975.4 450.6 L972.6 454.6 Z" fill="#111"/>
<rect x="987.0" y="455.5" width="1" height="1" fill="#b0b8c4"/>
<rect x="987.0" y="453.3" width="1" height="1" fill="#b0b8c4"/>
<rect x="984.8" y="455.5" width="1" height="1" fill="#b0b8c4"/>
<rect x="987.0" y="451.1" width="1" height="1" fill="#b0b8c4"/>
<rect x="984.8" y="453.3" width="1" height="1" fill="#b0b8c4"/>
<rect x="982.6" y="455.5" width="1" height="1" fill="#b0b8c4"/>
<rect x="407.5" y="39.5" width="580.5" height="12.299999999999997" fill="#ebebeb" stroke="#d4d4d4" stroke-width="0.8"/>
<path d="M401.3 48.199999999999996 L406.3 43.199999999999996 L406.3 48.199999999999996 Z" fill="#e0e0e0" stroke="#7a7a7a" stroke-width="0.8"/>
<rect x="409.5" y="42.5" width="7.800000000000001" height="6.3" fill="#f4f4f4" stroke="#b4b4b4" stroke-width="0.8" rx="1.5"/>
<path d="M410.79999999999995 44.449999999999996 L416.0 44.449999999999996 L413.4 47.15 Z" fill="#d40000"/>
<text transform="translate(420,49.0) scale(0.94,1)" font-size="9.691" font-weight="bold" fill="#0a0a0a" text-anchor="start" stroke="#0a0a0a" stroke-width="0.28">Distributions</text>
<rect x="417.3" y="54.2" width="102.90000000000003" height="12.099999999999994" fill="#ebebeb" stroke="#d4d4d4" stroke-width="0.8"/>
<path d="M411.1 62.699999999999996 L416.1 57.699999999999996 L416.1 62.699999999999996 Z" fill="#e0e0e0" stroke="#7a7a7a" stroke-width="0.8"/>
<rect x="419.3" y="57.2" width="7.800000000000001" height="6.3" fill="#f4f4f4" stroke="#b4b4b4" stroke-width="0.8" rx="1.5"/>
<path d="M420.59999999999997 59.15 L425.8 59.15 L423.2 61.85 Z" fill="#d40000"/>
<text transform="translate(431,63.5) scale(0.94,1)" font-size="9.691" font-weight="bold" fill="#0a0a0a" text-anchor="start" stroke="#0a0a0a" stroke-width="0.28">Column 1</text>
<rect x="531.7" y="54.2" width="143.29999999999995" height="12.099999999999994" fill="#ebebeb" stroke="#d4d4d4" stroke-width="0.8"/>
<path d="M525.5 62.699999999999996 L530.5 57.699999999999996 L530.5 62.699999999999996 Z" fill="#e0e0e0" stroke="#7a7a7a" stroke-width="0.8"/>
<rect x="533.7" y="57.2" width="7.800000000000001" height="6.3" fill="#f4f4f4" stroke="#b4b4b4" stroke-width="0.8" rx="1.5"/>
<path d="M535.0 59.15 L540.2 59.15 L537.6 61.85 Z" fill="#d40000"/>
<text transform="translate(545.9000000000001,63.5) scale(0.94,1)" font-size="9.691" font-weight="bold" fill="#0a0a0a" text-anchor="start" stroke="#0a0a0a" stroke-width="0.28">1</text>
<rect x="687" y="54.2" width="142.60000000000002" height="12.099999999999994" fill="#ebebeb" stroke="#d4d4d4" stroke-width="0.8"/>
<path d="M680.8 62.699999999999996 L685.8 57.699999999999996 L685.8 62.699999999999996 Z" fill="#e0e0e0" stroke="#7a7a7a" stroke-width="0.8"/>
<rect x="689.0" y="57.2" width="7.800000000000001" height="6.3" fill="#f4f4f4" stroke="#b4b4b4" stroke-width="0.8" rx="1.5"/>
<path d="M690.3 59.15 L695.5 59.15 L692.9 61.85 Z" fill="#d40000"/>
<text transform="translate(701.2,63.5) scale(0.94,1)" font-size="9.691" font-weight="bold" fill="#0a0a0a" text-anchor="start" stroke="#0a0a0a" stroke-width="0.28">2</text>
<rect x="841.6" y="54.2" width="143.19999999999993" height="12.099999999999994" fill="#ebebeb" stroke="#d4d4d4" stroke-width="0.8"/>
<path d="M835.4 62.699999999999996 L840.4 57.699999999999996 L840.4 62.699999999999996 Z" fill="#e0e0e0" stroke="#7a7a7a" stroke-width="0.8"/>
<rect x="843.6" y="57.2" width="7.800000000000001" height="6.3" fill="#f4f4f4" stroke="#b4b4b4" stroke-width="0.8" rx="1.5"/>
<path d="M844.9 59.15 L850.1 59.15 L847.5 61.85 Z" fill="#d40000"/>
<text transform="translate(855.8000000000001,63.5) scale(0.94,1)" font-size="9.691" font-weight="bold" fill="#0a0a0a" text-anchor="start" stroke="#0a0a0a" stroke-width="0.28">3</text>
<rect x="443.5" y="71.5" width="72.3" height="173.7" fill="#ffffff" stroke="#c9c9c9" stroke-width="0.8"/>
<rect x="444" y="75.0" width="62.5" height="41.75" fill="#b9c9b9" stroke="#5f6f5f" stroke-width="0.8"/>
<rect x="444" y="116.75" width="62.5" height="41.75" fill="#b9c9b9" stroke="#5f6f5f" stroke-width="0.8"/>
<rect x="444" y="158.5" width="62.5" height="41.75" fill="#b9c9b9" stroke="#5f6f5f" stroke-width="0.8"/>
<rect x="444" y="200.25" width="62.5" height="41.75" fill="url(#hatch)" stroke="#5f6f5f" stroke-width="0.8"/>
<line x1="444" y1="75.6" x2="506.5" y2="75.6" stroke="#6f7f6f" stroke-width="1.4"/>
<path d="M435.70 92.58 V98.38 M437.00 92.78 L439.40 98.38 L441.80 92.78" stroke="#3a2040" stroke-width="1.0" fill="none"/>
<path d="M436.50 134.32 V140.12 M438.90 134.32 V140.12 M441.30 134.32 V140.12" stroke="#3a2040" stroke-width="1.2" fill="none"/>
<path d="M436.00 134.57 H441.80 M436.00 139.88 H441.80" stroke="#3a2040" stroke-width="0.6" opacity="0.8" fill="none"/>
<path d="M438.50 176.07 V181.88 M441.30 176.07 V181.88" stroke="#3a2040" stroke-width="1.2" fill="none"/>
<path d="M438.00 176.32 H441.80 M438.00 181.62 H441.80" stroke="#3a2040" stroke-width="0.6" opacity="0.8" fill="none"/>
<path d="M440.80 217.82 V223.62" stroke="#3a2040" stroke-width="1.2" fill="none"/>
<path d="M439.80 218.07 H441.80 M439.80 223.38 H441.80" stroke="#3a2040" stroke-width="0.6" opacity="0.8" fill="none"/>
<rect x="564" y="71.5" width="100.3" height="173.7" fill="#ffffff" stroke="#c9c9c9" stroke-width="0.8"/>
<line x1="635.5" y1="71.9" x2="635.5" y2="244.8" stroke="#c9c9c9" stroke-width="0.9"/>
<line x1="560" y1="242.0" x2="564" y2="242.0" stroke="#8a8a8a" stroke-width="0.8"/>
<text transform="translate(558.5,244.9) scale(0.8736,1)" font-size="8.91" fill="#2a2a2a" text-anchor="end">0</text>
<line x1="560" y1="214.16666666666666" x2="564" y2="214.16666666666666" stroke="#8a8a8a" stroke-width="0.8"/>
<text transform="translate(558.5,217.06666666666666) scale(0.8736,1)" font-size="8.91" fill="#2a2a2a" text-anchor="end">10</text>
<line x1="560" y1="186.33333333333334" x2="564" y2="186.33333333333334" stroke="#8a8a8a" stroke-width="0.8"/>
<text transform="translate(558.5,189.23333333333335) scale(0.8736,1)" font-size="8.91" fill="#2a2a2a" text-anchor="end">20</text>
<line x1="560" y1="158.5" x2="564" y2="158.5" stroke="#8a8a8a" stroke-width="0.8"/>
<text transform="translate(558.5,161.4) scale(0.8736,1)" font-size="8.91" fill="#2a2a2a" text-anchor="end">30</text>
<line x1="560" y1="130.66666666666669" x2="564" y2="130.66666666666669" stroke="#8a8a8a" stroke-width="0.8"/>
<text transform="translate(558.5,133.5666666666667) scale(0.8736,1)" font-size="8.91" fill="#2a2a2a" text-anchor="end">40</text>
<line x1="560" y1="102.83333333333334" x2="564" y2="102.83333333333334" stroke="#8a8a8a" stroke-width="0.8"/>
<text transform="translate(558.5,105.73333333333335) scale(0.8736,1)" font-size="8.91" fill="#2a2a2a" text-anchor="end">50</text>
<line x1="560" y1="75.0" x2="564" y2="75.0" stroke="#8a8a8a" stroke-width="0.8"/>
<text transform="translate(558.5,77.9) scale(0.8736,1)" font-size="8.91" fill="#2a2a2a" text-anchor="end">60</text>
<rect x="564.3" y="214.16666666666666" width="41.2" height="27.833333333333332" fill="#b9c9b9" stroke="#5f6f5f" stroke-width="0.8"/>
<rect x="564.3" y="186.33333333333334" width="62.2" height="27.833333333333332" fill="#b9c9b9" stroke="#5f6f5f" stroke-width="0.8"/>
<rect x="564.3" y="158.5" width="62.2" height="27.833333333333332" fill="#b9c9b9" stroke="#5f6f5f" stroke-width="0.8"/>
<rect x="564.3" y="130.66666666666669" width="62.2" height="27.833333333333332" fill="#b9c9b9" stroke="#5f6f5f" stroke-width="0.8"/>
<rect x="564.3" y="102.83333333333334" width="62.2" height="27.833333333333332" fill="#b9c9b9" stroke="#5f6f5f" stroke-width="0.8"/>
<rect x="564.3" y="75.0" width="62.2" height="27.833333333333332" fill="#b9c9b9" stroke="#5f6f5f" stroke-width="0.8"/>
<rect x="564.3" y="214.16666666666666" width="41.2" height="27.833333333333332" fill="url(#hatch)" stroke="#5f6f5f" stroke-width="0.8"/>
<rect x="564.3" y="186.33333333333334" width="41.2" height="27.833333333333332" fill="url(#hatch)" stroke="#5f6f5f" stroke-width="0.8"/>
<line x1="649.65" y1="80.56666666666666" x2="649.65" y2="113.96666666666667" stroke="#333" stroke-width="0.9"/>
<line x1="649.65" y1="201.64166666666665" x2="649.65" y2="239.21666666666667" stroke="#333" stroke-width="0.9"/>
<line x1="644" y1="80.56666666666666" x2="655.3" y2="80.56666666666666" stroke="#333" stroke-width="0.9"/>
<line x1="644" y1="239.21666666666667" x2="655.3" y2="239.21666666666667" stroke="#333" stroke-width="0.9"/>
<rect x="644" y="113.96666666666667" width="11.299999999999955" height="87.67499999999998" fill="#ffffff" stroke="#333" stroke-width="0.9"/>
<line x1="644" y1="155.71666666666667" x2="655.3" y2="155.71666666666667" stroke="#333" stroke-width="0.9"/>
<path d="M649.65 131.57960000000003 L653.6999999999999 156.69918333333334 L649.65 181.81876666666668 L645.6 156.69918333333334 Z" fill="none" stroke="#333" stroke-width="0.75"/>
<path d="M641 222.51666666666665 H639.3 V147.36666666666667 H641" fill="none" stroke="#ec6a82" stroke-width="0.9"/>
<rect x="718.7" y="71.5" width="100.3" height="173.7" fill="#ffffff" stroke="#c9c9c9" stroke-width="0.8"/>
<line x1="790.2" y1="71.9" x2="790.2" y2="244.8" stroke="#c9c9c9" stroke-width="0.9"/>
<line x1="714.7" y1="242.0" x2="718.7" y2="242.0" stroke="#8a8a8a" stroke-width="0.8"/>
<text transform="translate(713.2,244.9) scale(0.8736,1)" font-size="8.91" fill="#2a2a2a" text-anchor="end">0</text>
<line x1="714.7" y1="214.16666666666666" x2="718.7" y2="214.16666666666666" stroke="#8a8a8a" stroke-width="0.8"/>
<text transform="translate(713.2,217.06666666666666) scale(0.8736,1)" font-size="8.91" fill="#2a2a2a" text-anchor="end">10</text>
<line x1="714.7" y1="186.33333333333334" x2="718.7" y2="186.33333333333334" stroke="#8a8a8a" stroke-width="0.8"/>
<text transform="translate(713.2,189.23333333333335) scale(0.8736,1)" font-size="8.91" fill="#2a2a2a" text-anchor="end">20</text>
<line x1="714.7" y1="158.5" x2="718.7" y2="158.5" stroke="#8a8a8a" stroke-width="0.8"/>
<text transform="translate(713.2,161.4) scale(0.8736,1)" font-size="8.91" fill="#2a2a2a" text-anchor="end">30</text>
<line x1="714.7" y1="130.66666666666669" x2="718.7" y2="130.66666666666669" stroke="#8a8a8a" stroke-width="0.8"/>
<text transform="translate(713.2,133.5666666666667) scale(0.8736,1)" font-size="8.91" fill="#2a2a2a" text-anchor="end">40</text>
<line x1="714.7" y1="102.83333333333334" x2="718.7" y2="102.83333333333334" stroke="#8a8a8a" stroke-width="0.8"/>
<text transform="translate(713.2,105.73333333333335) scale(0.8736,1)" font-size="8.91" fill="#2a2a2a" text-anchor="end">50</text>
<line x1="714.7" y1="75.0" x2="718.7" y2="75.0" stroke="#8a8a8a" stroke-width="0.8"/>
<text transform="translate(713.2,77.9) scale(0.8736,1)" font-size="8.91" fill="#2a2a2a" text-anchor="end">60</text>
<rect x="719.0" y="214.16666666666666" width="30.4" height="27.833333333333332" fill="#b9c9b9" stroke="#5f6f5f" stroke-width="0.8"/>
<rect x="719.0" y="186.33333333333334" width="46.0" height="27.833333333333332" fill="#b9c9b9" stroke="#5f6f5f" stroke-width="0.8"/>
<rect x="719.0" y="158.5" width="61.6" height="27.833333333333332" fill="#b9c9b9" stroke="#5f6f5f" stroke-width="0.8"/>
<rect x="719.0" y="130.66666666666669" width="30.4" height="27.833333333333332" fill="#b9c9b9" stroke="#5f6f5f" stroke-width="0.8"/>
<rect x="719.0" y="102.83333333333334" width="30.4" height="27.833333333333332" fill="#b9c9b9" stroke="#5f6f5f" stroke-width="0.8"/>
<rect x="719.0" y="75.0" width="61.6" height="27.833333333333332" fill="#b9c9b9" stroke="#5f6f5f" stroke-width="0.8"/>
<rect x="719.0" y="214.16666666666666" width="30.4" height="27.833333333333332" fill="url(#hatch)" stroke="#5f6f5f" stroke-width="0.8"/>
<rect x="719.0" y="186.33333333333334" width="30.4" height="27.833333333333332" fill="url(#hatch)" stroke="#5f6f5f" stroke-width="0.8"/>
<line x1="804.35" y1="77.78333333333333" x2="804.35" y2="107.00833333333333" stroke="#333" stroke-width="0.9"/>
<line x1="804.35" y1="198.85833333333335" x2="804.35" y2="236.43333333333334" stroke="#333" stroke-width="0.9"/>
<line x1="798.7" y1="77.78333333333333" x2="810.0" y2="77.78333333333333" stroke="#333" stroke-width="0.9"/>
<line x1="798.7" y1="236.43333333333334" x2="810.0" y2="236.43333333333334" stroke="#333" stroke-width="0.9"/>
<rect x="798.7" y="107.00833333333333" width="11.299999999999955" height="91.85000000000002" fill="#ffffff" stroke="#333" stroke-width="0.9"/>
<line x1="798.7" y1="161.28333333333333" x2="810.0" y2="161.28333333333333" stroke="#333" stroke-width="0.9"/>
<path d="M804.35 129.85671666666667 L808.4 155.88088333333334 L804.35 181.90505000000002 L800.3000000000001 155.88088333333334 Z" fill="none" stroke="#333" stroke-width="0.75"/>
<path d="M795.7 236.43333333333334 H794.0 V161.28333333333333 H795.7" fill="none" stroke="#ec6a82" stroke-width="0.9"/>
<rect x="873.3" y="71.5" width="100.3" height="173.7" fill="#ffffff" stroke="#c9c9c9" stroke-width="0.8"/>
<line x1="944.8" y1="71.9" x2="944.8" y2="244.8" stroke="#c9c9c9" stroke-width="0.9"/>
<line x1="869.3" y1="242.0" x2="873.3" y2="242.0" stroke="#8a8a8a" stroke-width="0.8"/>
<text transform="translate(867.8,244.9) scale(0.8736,1)" font-size="8.91" fill="#2a2a2a" text-anchor="end">0</text>
<line x1="869.3" y1="218.14285714285714" x2="873.3" y2="218.14285714285714" stroke="#8a8a8a" stroke-width="0.8"/>
<text transform="translate(867.8,221.04285714285714) scale(0.8736,1)" font-size="8.91" fill="#2a2a2a" text-anchor="end">10</text>
<line x1="869.3" y1="194.28571428571428" x2="873.3" y2="194.28571428571428" stroke="#8a8a8a" stroke-width="0.8"/>
<text transform="translate(867.8,197.18571428571428) scale(0.8736,1)" font-size="8.91" fill="#2a2a2a" text-anchor="end">20</text>
<line x1="869.3" y1="170.42857142857144" x2="873.3" y2="170.42857142857144" stroke="#8a8a8a" stroke-width="0.8"/>
<text transform="translate(867.8,173.32857142857145) scale(0.8736,1)" font-size="8.91" fill="#2a2a2a" text-anchor="end">30</text>
<line x1="869.3" y1="146.57142857142856" x2="873.3" y2="146.57142857142856" stroke="#8a8a8a" stroke-width="0.8"/>
<text transform="translate(867.8,149.47142857142856) scale(0.8736,1)" font-size="8.91" fill="#2a2a2a" text-anchor="end">40</text>
<line x1="869.3" y1="122.71428571428572" x2="873.3" y2="122.71428571428572" stroke="#8a8a8a" stroke-width="0.8"/>
<text transform="translate(867.8,125.61428571428573) scale(0.8736,1)" font-size="8.91" fill="#2a2a2a" text-anchor="end">50</text>
<line x1="869.3" y1="98.85714285714286" x2="873.3" y2="98.85714285714286" stroke="#8a8a8a" stroke-width="0.8"/>
<text transform="translate(867.8,101.75714285714287) scale(0.8736,1)" font-size="8.91" fill="#2a2a2a" text-anchor="end">60</text>
<line x1="869.3" y1="75.0" x2="873.3" y2="75.0" stroke="#8a8a8a" stroke-width="0.8"/>
<text transform="translate(867.8,77.9) scale(0.8736,1)" font-size="8.91" fill="#2a2a2a" text-anchor="end">70</text>
<rect x="873.5999999999999" y="218.14285714285714" width="46.0" height="23.857142857142858" fill="#b9c9b9" stroke="#5f6f5f" stroke-width="0.8"/>
<rect x="873.5999999999999" y="194.28571428571428" width="30.4" height="23.857142857142858" fill="#b9c9b9" stroke="#5f6f5f" stroke-width="0.8"/>
<rect x="873.5999999999999" y="170.42857142857144" width="46.0" height="23.857142857142858" fill="#b9c9b9" stroke="#5f6f5f" stroke-width="0.8"/>
<rect x="873.5999999999999" y="146.57142857142856" width="61.6" height="23.857142857142858" fill="#b9c9b9" stroke="#5f6f5f" stroke-width="0.8"/>
<rect x="873.5999999999999" y="122.71428571428572" width="30.4" height="23.857142857142858" fill="#b9c9b9" stroke="#5f6f5f" stroke-width="0.8"/>
<rect x="873.5999999999999" y="98.85714285714286" width="30.4" height="23.857142857142858" fill="#b9c9b9" stroke="#5f6f5f" stroke-width="0.8"/>
<rect x="873.5999999999999" y="75.0" width="14.799999999999999" height="23.857142857142858" fill="#b9c9b9" stroke="#5f6f5f" stroke-width="0.8"/>
<rect x="873.5999999999999" y="218.14285714285714" width="46.0" height="23.857142857142858" fill="url(#hatch)" stroke="#5f6f5f" stroke-width="0.8"/>
<rect x="873.5999999999999" y="194.28571428571428" width="30.4" height="23.857142857142858" fill="url(#hatch)" stroke="#5f6f5f" stroke-width="0.8"/>
<line x1="958.9499999999999" y1="98.85714285714286" x2="958.9499999999999" y2="131.06428571428572" stroke="#333" stroke-width="0.9"/>
<line x1="958.9499999999999" y1="209.79285714285714" x2="958.9499999999999" y2="234.84285714285716" stroke="#333" stroke-width="0.9"/>
<line x1="953.3" y1="98.85714285714286" x2="964.5999999999999" y2="98.85714285714286" stroke="#333" stroke-width="0.9"/>
<line x1="953.3" y1="234.84285714285716" x2="964.5999999999999" y2="234.84285714285716" stroke="#333" stroke-width="0.9"/>
<rect x="953.3" y="131.06428571428572" width="11.299999999999955" height="78.72857142857143" fill="#ffffff" stroke="#333" stroke-width="0.9"/>
<line x1="953.3" y1="170.42857142857144" x2="964.5999999999999" y2="170.42857142857144" stroke="#333" stroke-width="0.9"/>
<path d="M958.9499999999999 148.2963 L962.9999999999999 170.00868571428572 L958.9499999999999 191.7186857142857 L954.9 170.00868571428572 Z" fill="none" stroke="#333" stroke-width="0.75"/>
<path d="M950.3 234.84285714285716 H948.5999999999999 V170.42857142857144 H950.3" fill="none" stroke="#ec6a82" stroke-width="0.9"/>
<rect x="425.3" y="252.3" width="90.40000000000003" height="12.300000000000011" fill="#ebebeb" stroke="#d4d4d4" stroke-width="0.8"/>
<path d="M419.1 261.0 L424.1 256.0 L424.1 261.0 Z" fill="#e0e0e0" stroke="#7a7a7a" stroke-width="0.8"/>
<text transform="translate(427.3,261.8) scale(0.94,1)" font-size="9.585" font-weight="bold" fill="#0a0a0a" text-anchor="start" stroke="#0a0a0a" stroke-width="0.28">Frequencies</text>
<rect x="426" y="267" width="26.6" height="9.4" fill="#dedede"/>
<rect x="453.4" y="267" width="26.8" height="9.4" fill="#dedede"/>
<rect x="482" y="267" width="31.6" height="9.4" fill="#dedede"/>
<rect x="426" y="276.4" width="26.6" height="47.2" fill="#dedede"/>
<rect x="426" y="277.4" width="87.6" height="9.3" fill="#3399ff"/>
<text transform="translate(428,275.3) scale(0.9,1)" font-size="8.2" font-weight="bold" fill="#111" text-anchor="start">Level</text>
<text transform="translate(478.3,275.3) scale(0.9,1)" font-size="8.2" font-weight="bold" fill="#111" text-anchor="end">Count</text>
<text transform="translate(511.6,275.3) scale(0.9,1)" font-size="8.2" font-weight="bold" fill="#111" text-anchor="end">Prob</text>
<path d="M428.80 279.60 V285.40" stroke="#ffffff" stroke-width="1.2" fill="none"/>
<path d="M427.80 279.85 H429.80 M427.80 285.15 H429.80" stroke="#ffffff" stroke-width="0.6" opacity="0.8" fill="none"/>
<text transform="translate(478.3,285.4) scale(0.869,1)" font-size="8.25" fill="#ffffff" stroke="#ffffff" stroke-width="0.16" text-anchor="end">5</text>
<text transform="translate(511.6,285.4) scale(0.869,1)" font-size="8.25" fill="#ffffff" stroke="#ffffff" stroke-width="0.16" text-anchor="end">0,25000</text>
<path d="M428.30 289.15 V294.95 M431.10 289.15 V294.95" stroke="#3a2040" stroke-width="1.2" fill="none"/>
<path d="M427.80 289.40 H431.60 M427.80 294.70 H431.60" stroke="#3a2040" stroke-width="0.6" opacity="0.8" fill="none"/>
<text transform="translate(478.3,294.95) scale(0.869,1)" font-size="8.25" fill="#141414" stroke="#141414" stroke-width="0.16" text-anchor="end">5</text>
<text transform="translate(511.6,294.95) scale(0.869,1)" font-size="8.25" fill="#141414" stroke="#141414" stroke-width="0.16" text-anchor="end">0,25000</text>
<path d="M428.30 298.70 V304.50 M430.70 298.70 V304.50 M433.10 298.70 V304.50" stroke="#3a2040" stroke-width="1.2" fill="none"/>
<path d="M427.80 298.95 H433.60 M427.80 304.25 H433.60" stroke="#3a2040" stroke-width="0.6" opacity="0.8" fill="none"/>
<text transform="translate(478.3,304.5) scale(0.869,1)" font-size="8.25" fill="#141414" stroke="#141414" stroke-width="0.16" text-anchor="end">5</text>
<text transform="translate(511.6,304.5) scale(0.869,1)" font-size="8.25" fill="#141414" stroke="#141414" stroke-width="0.16" text-anchor="end">0,25000</text>
<path d="M428.30 308.25 V314.05 M429.60 308.45 L432.00 314.05 L434.40 308.45" stroke="#3a2040" stroke-width="1.0" fill="none"/>
<text transform="translate(478.3,314.04999999999995) scale(0.869,1)" font-size="8.25" fill="#141414" stroke="#141414" stroke-width="0.16" text-anchor="end">5</text>
<text transform="translate(511.6,314.04999999999995) scale(0.869,1)" font-size="8.25" fill="#141414" stroke="#141414" stroke-width="0.16" text-anchor="end">0,25000</text>
<text transform="translate(428,323.59999999999997) scale(0.91,1)" font-size="8.25" fill="#141414" stroke="#141414" stroke-width="0.16" text-anchor="start">Total</text>
<text transform="translate(478.3,323.59999999999997) scale(0.869,1)" font-size="8.25" fill="#141414" stroke="#141414" stroke-width="0.16" text-anchor="end">20</text>
<text transform="translate(511.6,323.59999999999997) scale(0.869,1)" font-size="8.25" fill="#141414" stroke="#141414" stroke-width="0.16" text-anchor="end">1,00000</text>
<text transform="translate(428,334.3) scale(0.91,1)" font-size="8.25" fill="#141414" stroke="#141414" stroke-width="0.16" text-anchor="start">N Missing</text>
<text transform="translate(486.2,334.3) scale(0.91,1)" font-size="8.25" fill="#141414" stroke="#141414" stroke-width="0.16" text-anchor="end">0</text>
<text transform="translate(449.6,344.1) scale(0.91,1)" font-size="8.25" fill="#141414" stroke="#141414" stroke-width="0.16" text-anchor="end">4</text>
<text transform="translate(453.6,344.1) scale(0.91,1)" font-size="8.25" fill="#141414" stroke="#141414" stroke-width="0.16" text-anchor="start">Levels</text>
<rect x="539.2" y="252.3" width="118.5" height="12.300000000000011" fill="#ebebeb" stroke="#d4d4d4" stroke-width="0.8"/>
<path d="M533.0 261.0 L538.0 256.0 L538.0 261.0 Z" fill="#e0e0e0" stroke="#7a7a7a" stroke-width="0.8"/>
<text transform="translate(541.5,261.8) scale(0.94,1)" font-size="9.585" font-weight="bold" fill="#0a0a0a" text-anchor="start" stroke="#0a0a0a" stroke-width="0.28">Quantiles</text>
<rect x="539.5" y="266.2" width="27.3" height="102.5" fill="#dedede"/>
<text transform="translate(541.0,273.9) scale(0.869,1)" font-size="8.25" fill="#141414" stroke="#141414" stroke-width="0.16" text-anchor="start">100.0%</text>
<text transform="translate(601.4000000000001,273.9) scale(0.91,1)" font-size="8.25" fill="#141414" stroke="#141414" stroke-width="0.16" text-anchor="end">maximum</text>
<text transform="translate(654.2,273.9) scale(0.869,1)" font-size="8.25" fill="#141414" stroke="#141414" stroke-width="0.16" text-anchor="end">58</text>
<text transform="translate(541.0,283.32) scale(0.869,1)" font-size="8.25" fill="#141414" stroke="#141414" stroke-width="0.16" text-anchor="start">99.5%</text>
<text transform="translate(654.2,283.32) scale(0.869,1)" font-size="8.25" fill="#141414" stroke="#141414" stroke-width="0.16" text-anchor="end">58</text>
<text transform="translate(541.0,292.73999999999995) scale(0.869,1)" font-size="8.25" fill="#141414" stroke="#141414" stroke-width="0.16" text-anchor="start">97.5%</text>
<text transform="translate(654.2,292.73999999999995) scale(0.869,1)" font-size="8.25" fill="#141414" stroke="#141414" stroke-width="0.16" text-anchor="end">58</text>
<text transform="translate(541.0,302.15999999999997) scale(0.869,1)" font-size="8.25" fill="#141414" stroke="#141414" stroke-width="0.16" text-anchor="start">90.0%</text>
<text transform="translate(654.2,302.15999999999997) scale(0.869,1)" font-size="8.25" fill="#141414" stroke="#141414" stroke-width="0.16" text-anchor="end">55,6</text>
<text transform="translate(541.0,311.58) scale(0.869,1)" font-size="8.25" fill="#141414" stroke="#141414" stroke-width="0.16" text-anchor="start">75.0%</text>
<text transform="translate(601.4000000000001,311.58) scale(0.91,1)" font-size="8.25" fill="#141414" stroke="#141414" stroke-width="0.16" text-anchor="end">quartile</text>
<text transform="translate(654.2,311.58) scale(0.869,1)" font-size="8.25" fill="#141414" stroke="#141414" stroke-width="0.16" text-anchor="end">46</text>
<text transform="translate(541.0,321.0) scale(0.869,1)" font-size="8.25" fill="#141414" stroke="#141414" stroke-width="0.16" text-anchor="start">50.0%</text>
<text transform="translate(601.4000000000001,321.0) scale(0.91,1)" font-size="8.25" fill="#141414" stroke="#141414" stroke-width="0.16" text-anchor="end">median</text>
<text transform="translate(654.2,321.0) scale(0.869,1)" font-size="8.25" fill="#141414" stroke="#141414" stroke-width="0.16" text-anchor="end">31</text>
<text transform="translate(541.0,330.41999999999996) scale(0.869,1)" font-size="8.25" fill="#141414" stroke="#141414" stroke-width="0.16" text-anchor="start">25.0%</text>
<text transform="translate(601.4000000000001,330.41999999999996) scale(0.91,1)" font-size="8.25" fill="#141414" stroke="#141414" stroke-width="0.16" text-anchor="end">quartile</text>
<text transform="translate(654.2,330.41999999999996) scale(0.869,1)" font-size="8.25" fill="#141414" stroke="#141414" stroke-width="0.16" text-anchor="end">14,5</text>
<text transform="translate(541.0,339.84) scale(0.869,1)" font-size="8.25" fill="#141414" stroke="#141414" stroke-width="0.16" text-anchor="start">10.0%</text>
<text transform="translate(654.2,339.84) scale(0.869,1)" font-size="8.25" fill="#141414" stroke="#141414" stroke-width="0.16" text-anchor="end">5,8</text>
<text transform="translate(541.0,349.26) scale(0.869,1)" font-size="8.25" fill="#141414" stroke="#141414" stroke-width="0.16" text-anchor="start">2.5%</text>
<text transform="translate(654.2,349.26) scale(0.869,1)" font-size="8.25" fill="#141414" stroke="#141414" stroke-width="0.16" text-anchor="end">1</text>
<text transform="translate(541.0,358.67999999999995) scale(0.869,1)" font-size="8.25" fill="#141414" stroke="#141414" stroke-width="0.16" text-anchor="start">0.5%</text>
<text transform="translate(654.2,358.67999999999995) scale(0.869,1)" font-size="8.25" fill="#141414" stroke="#141414" stroke-width="0.16" text-anchor="end">1</text>
<text transform="translate(541.0,368.09999999999997) scale(0.869,1)" font-size="8.25" fill="#141414" stroke="#141414" stroke-width="0.16" text-anchor="start">0.0%</text>
<text transform="translate(601.4000000000001,368.09999999999997) scale(0.91,1)" font-size="8.25" fill="#141414" stroke="#141414" stroke-width="0.16" text-anchor="end">minimum</text>
<text transform="translate(654.2,368.09999999999997) scale(0.869,1)" font-size="8.25" fill="#141414" stroke="#141414" stroke-width="0.16" text-anchor="end">1</text>
<rect x="539.3000000000001" y="372.2" width="103.39999999999998" height="12.300000000000011" fill="#ebebeb" stroke="#d4d4d4" stroke-width="0.8"/>
<path d="M533.1 380.9 L538.1 375.9 L538.1 380.9 Z" fill="#e0e0e0" stroke="#7a7a7a" stroke-width="0.8"/>
<rect x="541.3000000000001" y="375.2" width="7.800000000000001" height="6.3" fill="#f4f4f4" stroke="#b4b4b4" stroke-width="0.8" rx="1.5"/>
<path d="M542.6 377.15 L547.8000000000001 377.15 L545.2 379.84999999999997 Z" fill="#d40000"/>
<text transform="translate(551.8000000000001,381.7) scale(0.94,1)" font-size="9.585" font-weight="bold" fill="#0a0a0a" text-anchor="start" stroke="#0a0a0a" stroke-width="0.28">Summary Statistics</text>
<rect x="539.5" y="385.5" width="61.3" height="56.2" fill="#dedede"/>
<text transform="translate(541.0,393.3) scale(0.8918,1)" font-size="8.25" fill="#141414" stroke="#141414" stroke-width="0.16" text-anchor="start">Mean</text>
<text transform="translate(639.0,393.3) scale(0.869,1)" font-size="8.25" fill="#141414" stroke="#141414" stroke-width="0.16" text-anchor="end">30,647059</text>
<text transform="translate(541.0,402.72) scale(0.8918,1)" font-size="8.25" fill="#141414" stroke="#141414" stroke-width="0.16" text-anchor="start">Std Dev</text>
<text transform="translate(639.0,402.72) scale(0.869,1)" font-size="8.25" fill="#141414" stroke="#141414" stroke-width="0.16" text-anchor="end">17,55328</text>
<text transform="translate(541.0,412.14) scale(0.8918,1)" font-size="8.25" fill="#141414" stroke="#141414" stroke-width="0.16" text-anchor="start">Std Err Mean</text>
<text transform="translate(639.0,412.14) scale(0.869,1)" font-size="8.25" fill="#141414" stroke="#141414" stroke-width="0.16" text-anchor="end">4,2572958</text>
<text transform="translate(541.0,421.56) scale(0.8918,1)" font-size="8.25" fill="#141414" stroke="#141414" stroke-width="0.16" text-anchor="start">Upper 95% Mean</text>
<text transform="translate(639.0,421.56) scale(0.869,1)" font-size="8.25" fill="#141414" stroke="#141414" stroke-width="0.16" text-anchor="end">39,672123</text>
<text transform="translate(541.0,430.98) scale(0.8918,1)" font-size="8.25" fill="#141414" stroke="#141414" stroke-width="0.16" text-anchor="start">Lower 95% Mean</text>
<text transform="translate(639.0,430.98) scale(0.869,1)" font-size="8.25" fill="#141414" stroke="#141414" stroke-width="0.16" text-anchor="end">21,621995</text>
<text transform="translate(541.0,440.40000000000003) scale(0.8918,1)" font-size="8.25" fill="#141414" stroke="#141414" stroke-width="0.16" text-anchor="start">N</text>
<text transform="translate(639.0,440.40000000000003) scale(0.869,1)" font-size="8.25" fill="#141414" stroke="#141414" stroke-width="0.16" text-anchor="end">17</text>
<rect x="694.2" y="252.3" width="118.5" height="12.300000000000011" fill="#ebebeb" stroke="#d4d4d4" stroke-width="0.8"/>
<path d="M688.0 261.0 L693.0 256.0 L693.0 261.0 Z" fill="#e0e0e0" stroke="#7a7a7a" stroke-width="0.8"/>
<text transform="translate(696.5,261.8) scale(0.94,1)" font-size="9.585" font-weight="bold" fill="#0a0a0a" text-anchor="start" stroke="#0a0a0a" stroke-width="0.28">Quantiles</text>
<rect x="694.5" y="266.2" width="27.3" height="102.5" fill="#dedede"/>
<text transform="translate(696.0,273.9) scale(0.869,1)" font-size="8.25" fill="#141414" stroke="#141414" stroke-width="0.16" text-anchor="start">100.0%</text>
<text transform="translate(756.4000000000001,273.9) scale(0.91,1)" font-size="8.25" fill="#141414" stroke="#141414" stroke-width="0.16" text-anchor="end">maximum</text>
<text transform="translate(809.2,273.9) scale(0.869,1)" font-size="8.25" fill="#141414" stroke="#141414" stroke-width="0.16" text-anchor="end">59</text>
<text transform="translate(696.0,283.32) scale(0.869,1)" font-size="8.25" fill="#141414" stroke="#141414" stroke-width="0.16" text-anchor="start">99.5%</text>
<text transform="translate(809.2,283.32) scale(0.869,1)" font-size="8.25" fill="#141414" stroke="#141414" stroke-width="0.16" text-anchor="end">59</text>
<text transform="translate(696.0,292.73999999999995) scale(0.869,1)" font-size="8.25" fill="#141414" stroke="#141414" stroke-width="0.16" text-anchor="start">97.5%</text>
<text transform="translate(809.2,292.73999999999995) scale(0.869,1)" font-size="8.25" fill="#141414" stroke="#141414" stroke-width="0.16" text-anchor="end">59</text>
<text transform="translate(696.0,302.15999999999997) scale(0.869,1)" font-size="8.25" fill="#141414" stroke="#141414" stroke-width="0.16" text-anchor="start">90.0%</text>
<text transform="translate(809.2,302.15999999999997) scale(0.869,1)" font-size="8.25" fill="#141414" stroke="#141414" stroke-width="0.16" text-anchor="end">56,6</text>
<text transform="translate(696.0,311.58) scale(0.869,1)" font-size="8.25" fill="#141414" stroke="#141414" stroke-width="0.16" text-anchor="start">75.0%</text>
<text transform="translate(756.4000000000001,311.58) scale(0.91,1)" font-size="8.25" fill="#141414" stroke="#141414" stroke-width="0.16" text-anchor="end">quartile</text>
<text transform="translate(809.2,311.58) scale(0.869,1)" font-size="8.25" fill="#141414" stroke="#141414" stroke-width="0.16" text-anchor="end">48,5</text>
<text transform="translate(696.0,321.0) scale(0.869,1)" font-size="8.25" fill="#141414" stroke="#141414" stroke-width="0.16" text-anchor="start">50.0%</text>
<text transform="translate(756.4000000000001,321.0) scale(0.91,1)" font-size="8.25" fill="#141414" stroke="#141414" stroke-width="0.16" text-anchor="end">median</text>
<text transform="translate(809.2,321.0) scale(0.869,1)" font-size="8.25" fill="#141414" stroke="#141414" stroke-width="0.16" text-anchor="end">29</text>
<text transform="translate(696.0,330.41999999999996) scale(0.869,1)" font-size="8.25" fill="#141414" stroke="#141414" stroke-width="0.16" text-anchor="start">25.0%</text>
<text transform="translate(756.4000000000001,330.41999999999996) scale(0.91,1)" font-size="8.25" fill="#141414" stroke="#141414" stroke-width="0.16" text-anchor="end">quartile</text>
<text transform="translate(809.2,330.41999999999996) scale(0.869,1)" font-size="8.25" fill="#141414" stroke="#141414" stroke-width="0.16" text-anchor="end">15,5</text>
<text transform="translate(696.0,339.84) scale(0.869,1)" font-size="8.25" fill="#141414" stroke="#141414" stroke-width="0.16" text-anchor="start">10.0%</text>
<text transform="translate(809.2,339.84) scale(0.869,1)" font-size="8.25" fill="#141414" stroke="#141414" stroke-width="0.16" text-anchor="end">4,4</text>
<text transform="translate(696.0,349.26) scale(0.869,1)" font-size="8.25" fill="#141414" stroke="#141414" stroke-width="0.16" text-anchor="start">2.5%</text>
<text transform="translate(809.2,349.26) scale(0.869,1)" font-size="8.25" fill="#141414" stroke="#141414" stroke-width="0.16" text-anchor="end">2</text>
<text transform="translate(696.0,358.67999999999995) scale(0.869,1)" font-size="8.25" fill="#141414" stroke="#141414" stroke-width="0.16" text-anchor="start">0.5%</text>
<text transform="translate(809.2,358.67999999999995) scale(0.869,1)" font-size="8.25" fill="#141414" stroke="#141414" stroke-width="0.16" text-anchor="end">2</text>
<text transform="translate(696.0,368.09999999999997) scale(0.869,1)" font-size="8.25" fill="#141414" stroke="#141414" stroke-width="0.16" text-anchor="start">0.0%</text>
<text transform="translate(756.4000000000001,368.09999999999997) scale(0.91,1)" font-size="8.25" fill="#141414" stroke="#141414" stroke-width="0.16" text-anchor="end">minimum</text>
<text transform="translate(809.2,368.09999999999997) scale(0.869,1)" font-size="8.25" fill="#141414" stroke="#141414" stroke-width="0.16" text-anchor="end">2</text>
<rect x="694.3000000000001" y="372.2" width="103.39999999999998" height="12.300000000000011" fill="#ebebeb" stroke="#d4d4d4" stroke-width="0.8"/>
<path d="M688.1 380.9 L693.1 375.9 L693.1 380.9 Z" fill="#e0e0e0" stroke="#7a7a7a" stroke-width="0.8"/>
<rect x="696.3000000000001" y="375.2" width="7.800000000000001" height="6.3" fill="#f4f4f4" stroke="#b4b4b4" stroke-width="0.8" rx="1.5"/>
<path d="M697.6 377.15 L702.8000000000001 377.15 L700.2 379.84999999999997 Z" fill="#d40000"/>
<text transform="translate(706.8000000000001,381.7) scale(0.94,1)" font-size="9.585" font-weight="bold" fill="#0a0a0a" text-anchor="start" stroke="#0a0a0a" stroke-width="0.28">Summary Statistics</text>
<rect x="694.5" y="385.5" width="61.3" height="56.2" fill="#dedede"/>
<text transform="translate(696.0,393.3) scale(0.8918,1)" font-size="8.25" fill="#141414" stroke="#141414" stroke-width="0.16" text-anchor="start">Mean</text>
<text transform="translate(794.0,393.3) scale(0.869,1)" font-size="8.25" fill="#141414" stroke="#141414" stroke-width="0.16" text-anchor="end">30,941176</text>
<text transform="translate(696.0,402.72) scale(0.8918,1)" font-size="8.25" fill="#141414" stroke="#141414" stroke-width="0.16" text-anchor="start">Std Dev</text>
<text transform="translate(794.0,402.72) scale(0.869,1)" font-size="8.25" fill="#141414" stroke="#141414" stroke-width="0.16" text-anchor="end">18,184714</text>
<text transform="translate(696.0,412.14) scale(0.8918,1)" font-size="8.25" fill="#141414" stroke="#141414" stroke-width="0.16" text-anchor="start">Std Err Mean</text>
<text transform="translate(794.0,412.14) scale(0.869,1)" font-size="8.25" fill="#141414" stroke="#141414" stroke-width="0.16" text-anchor="end">4,410441</text>
<text transform="translate(696.0,421.56) scale(0.8918,1)" font-size="8.25" fill="#141414" stroke="#141414" stroke-width="0.16" text-anchor="start">Upper 95% Mean</text>
<text transform="translate(794.0,421.56) scale(0.869,1)" font-size="8.25" fill="#141414" stroke="#141414" stroke-width="0.16" text-anchor="end">40,290894</text>
<text transform="translate(696.0,430.98) scale(0.8918,1)" font-size="8.25" fill="#141414" stroke="#141414" stroke-width="0.16" text-anchor="start">Lower 95% Mean</text>
<text transform="translate(794.0,430.98) scale(0.869,1)" font-size="8.25" fill="#141414" stroke="#141414" stroke-width="0.16" text-anchor="end">21,591459</text>
<text transform="translate(696.0,440.40000000000003) scale(0.8918,1)" font-size="8.25" fill="#141414" stroke="#141414" stroke-width="0.16" text-anchor="start">N</text>
<text transform="translate(794.0,440.40000000000003) scale(0.869,1)" font-size="8.25" fill="#141414" stroke="#141414" stroke-width="0.16" text-anchor="end">17</text>
<rect x="849.2" y="252.3" width="118.5" height="12.300000000000011" fill="#ebebeb" stroke="#d4d4d4" stroke-width="0.8"/>
<path d="M843.0 261.0 L848.0 256.0 L848.0 261.0 Z" fill="#e0e0e0" stroke="#7a7a7a" stroke-width="0.8"/>
<text transform="translate(851.5,261.8) scale(0.94,1)" font-size="9.585" font-weight="bold" fill="#0a0a0a" text-anchor="start" stroke="#0a0a0a" stroke-width="0.28">Quantiles</text>
<rect x="849.5" y="266.2" width="27.3" height="102.5" fill="#dedede"/>
<text transform="translate(851.0,273.9) scale(0.869,1)" font-size="8.25" fill="#141414" stroke="#141414" stroke-width="0.16" text-anchor="start">100.0%</text>
<text transform="translate(911.4000000000001,273.9) scale(0.91,1)" font-size="8.25" fill="#141414" stroke="#141414" stroke-width="0.16" text-anchor="end">maximum</text>
<text transform="translate(964.2,273.9) scale(0.869,1)" font-size="8.25" fill="#141414" stroke="#141414" stroke-width="0.16" text-anchor="end">60</text>
<text transform="translate(851.0,283.32) scale(0.869,1)" font-size="8.25" fill="#141414" stroke="#141414" stroke-width="0.16" text-anchor="start">99.5%</text>
<text transform="translate(964.2,283.32) scale(0.869,1)" font-size="8.25" fill="#141414" stroke="#141414" stroke-width="0.16" text-anchor="end">60</text>
<text transform="translate(851.0,292.73999999999995) scale(0.869,1)" font-size="8.25" fill="#141414" stroke="#141414" stroke-width="0.16" text-anchor="start">97.5%</text>
<text transform="translate(964.2,292.73999999999995) scale(0.869,1)" font-size="8.25" fill="#141414" stroke="#141414" stroke-width="0.16" text-anchor="end">60</text>
<text transform="translate(851.0,302.15999999999997) scale(0.869,1)" font-size="8.25" fill="#141414" stroke="#141414" stroke-width="0.16" text-anchor="start">90.0%</text>
<text transform="translate(964.2,302.15999999999997) scale(0.869,1)" font-size="8.25" fill="#141414" stroke="#141414" stroke-width="0.16" text-anchor="end">55,2</text>
<text transform="translate(851.0,311.58) scale(0.869,1)" font-size="8.25" fill="#141414" stroke="#141414" stroke-width="0.16" text-anchor="start">75.0%</text>
<text transform="translate(911.4000000000001,311.58) scale(0.91,1)" font-size="8.25" fill="#141414" stroke="#141414" stroke-width="0.16" text-anchor="end">quartile</text>
<text transform="translate(964.2,311.58) scale(0.869,1)" font-size="8.25" fill="#141414" stroke="#141414" stroke-width="0.16" text-anchor="end">46,5</text>
<text transform="translate(851.0,321.0) scale(0.869,1)" font-size="8.25" fill="#141414" stroke="#141414" stroke-width="0.16" text-anchor="start">50.0%</text>
<text transform="translate(911.4000000000001,321.0) scale(0.91,1)" font-size="8.25" fill="#141414" stroke="#141414" stroke-width="0.16" text-anchor="end">median</text>
<text transform="translate(964.2,321.0) scale(0.869,1)" font-size="8.25" fill="#141414" stroke="#141414" stroke-width="0.16" text-anchor="end">30</text>
<text transform="translate(851.0,330.41999999999996) scale(0.869,1)" font-size="8.25" fill="#141414" stroke="#141414" stroke-width="0.16" text-anchor="start">25.0%</text>
<text transform="translate(911.4000000000001,330.41999999999996) scale(0.91,1)" font-size="8.25" fill="#141414" stroke="#141414" stroke-width="0.16" text-anchor="end">quartile</text>
<text transform="translate(964.2,330.41999999999996) scale(0.869,1)" font-size="8.25" fill="#141414" stroke="#141414" stroke-width="0.16" text-anchor="end">13,5</text>
<text transform="translate(851.0,339.84) scale(0.869,1)" font-size="8.25" fill="#141414" stroke="#141414" stroke-width="0.16" text-anchor="start">10.0%</text>
<text transform="translate(964.2,339.84) scale(0.869,1)" font-size="8.25" fill="#141414" stroke="#141414" stroke-width="0.16" text-anchor="end">5,4</text>
<text transform="translate(851.0,349.26) scale(0.869,1)" font-size="8.25" fill="#141414" stroke="#141414" stroke-width="0.16" text-anchor="start">2.5%</text>
<text transform="translate(964.2,349.26) scale(0.869,1)" font-size="8.25" fill="#141414" stroke="#141414" stroke-width="0.16" text-anchor="end">3</text>
<text transform="translate(851.0,358.67999999999995) scale(0.869,1)" font-size="8.25" fill="#141414" stroke="#141414" stroke-width="0.16" text-anchor="start">0.5%</text>
<text transform="translate(964.2,358.67999999999995) scale(0.869,1)" font-size="8.25" fill="#141414" stroke="#141414" stroke-width="0.16" text-anchor="end">3</text>
<text transform="translate(851.0,368.09999999999997) scale(0.869,1)" font-size="8.25" fill="#141414" stroke="#141414" stroke-width="0.16" text-anchor="start">0.0%</text>
<text transform="translate(911.4000000000001,368.09999999999997) scale(0.91,1)" font-size="8.25" fill="#141414" stroke="#141414" stroke-width="0.16" text-anchor="end">minimum</text>
<text transform="translate(964.2,368.09999999999997) scale(0.869,1)" font-size="8.25" fill="#141414" stroke="#141414" stroke-width="0.16" text-anchor="end">3</text>
<rect x="849.3000000000001" y="372.2" width="103.39999999999998" height="12.300000000000011" fill="#ebebeb" stroke="#d4d4d4" stroke-width="0.8"/>
<path d="M843.1 380.9 L848.1 375.9 L848.1 380.9 Z" fill="#e0e0e0" stroke="#7a7a7a" stroke-width="0.8"/>
<rect x="851.3000000000001" y="375.2" width="7.800000000000001" height="6.3" fill="#f4f4f4" stroke="#b4b4b4" stroke-width="0.8" rx="1.5"/>
<path d="M852.6 377.15 L857.8000000000001 377.15 L855.2 379.84999999999997 Z" fill="#d40000"/>
<text transform="translate(861.8000000000001,381.7) scale(0.94,1)" font-size="9.585" font-weight="bold" fill="#0a0a0a" text-anchor="start" stroke="#0a0a0a" stroke-width="0.28">Summary Statistics</text>
<rect x="849.5" y="385.5" width="61.3" height="56.2" fill="#dedede"/>
<text transform="translate(851.0,393.3) scale(0.8918,1)" font-size="8.25" fill="#141414" stroke="#141414" stroke-width="0.16" text-anchor="start">Mean</text>
<text transform="translate(949.0,393.3) scale(0.869,1)" font-size="8.25" fill="#141414" stroke="#141414" stroke-width="0.16" text-anchor="end">30,176471</text>
<text transform="translate(851.0,402.72) scale(0.8918,1)" font-size="8.25" fill="#141414" stroke="#141414" stroke-width="0.16" text-anchor="start">Std Dev</text>
<text transform="translate(949.0,402.72) scale(0.869,1)" font-size="8.25" fill="#141414" stroke="#141414" stroke-width="0.16" text-anchor="end">17,699701</text>
<text transform="translate(851.0,412.14) scale(0.8918,1)" font-size="8.25" fill="#141414" stroke="#141414" stroke-width="0.16" text-anchor="start">Std Err Mean</text>
<text transform="translate(949.0,412.14) scale(0.869,1)" font-size="8.25" fill="#141414" stroke="#141414" stroke-width="0.16" text-anchor="end">4,292808</text>
<text transform="translate(851.0,421.56) scale(0.8918,1)" font-size="8.25" fill="#141414" stroke="#141414" stroke-width="0.16" text-anchor="start">Upper 95% Mean</text>
<text transform="translate(949.0,421.56) scale(0.869,1)" font-size="8.25" fill="#141414" stroke="#141414" stroke-width="0.16" text-anchor="end">39,276817</text>
<text transform="translate(851.0,430.98) scale(0.8918,1)" font-size="8.25" fill="#141414" stroke="#141414" stroke-width="0.16" text-anchor="start">Lower 95% Mean</text>
<text transform="translate(949.0,430.98) scale(0.869,1)" font-size="8.25" fill="#141414" stroke="#141414" stroke-width="0.16" text-anchor="end">21,076124</text>
<text transform="translate(851.0,440.40000000000003) scale(0.8918,1)" font-size="8.25" fill="#141414" stroke="#141414" stroke-width="0.16" text-anchor="start">N</text>
<text transform="translate(949.0,440.40000000000003) scale(0.869,1)" font-size="8.25" fill="#141414" stroke="#141414" stroke-width="0.16" text-anchor="end">17</text>
<linearGradient id="botstrip" x1="0" y1="0" x2="0" y2="1"><stop offset="0" stop-color="#fbfbfd"/><stop offset="1" stop-color="#e2e5f2"/></linearGradient>
<rect x="0" y="483" width="999" height="3" fill="url(#botstrip)"/>
<rect x="0" y="485.8" width="999" height="1.3" fill="#9a9fb0"/>
<rect x="0" y="487" width="999" height="35.8" fill="#b3bcdb"/>
<rect x="2" y="485.8" width="1" height="37.5" fill="#9a9fb0"/>
<rect x="3" y="487" width="2.5" height="35.8" fill="#c2c9e3"/>
<rect x="0" y="522.7" width="999" height="1.3" fill="#a3a9c0"/>
<rect x="0" y="524" width="999" height="2" fill="#eef1f7"/>
<rect x="5.7" y="489.7" width="30.3" height="30.3" fill="#ffffff" stroke="#d4d8e6" stroke-width="0.6"/>
<rect x="7" y="490.5" width="3.5" height="1.2" fill="#b0b0b0"/>
<rect x="9" y="492.7" width="4.2" height="9.1" fill="#bcd0bc"/>
<rect x="9" y="501.6" width="4.2" height="3.3" fill="#3f6a42"/>
<rect x="17.8" y="492.7" width="4.2" height="9.1" fill="#bcd0bc"/>
<rect x="17.8" y="501.6" width="4.2" height="3.3" fill="#3f6a42"/>
<rect x="28.9" y="492.7" width="4.2" height="9.1" fill="#bcd0bc"/>
<rect x="28.9" y="501.6" width="4.2" height="3.3" fill="#3f6a42"/>
<rect x="22.0" y="492.7" width="0" height="0" fill="#fff"/>
<rect x="31.5" y="496" width="1.8" height="5" fill="#ffffff"/>
<rect x="8" y="506.3" width="6.5" height="2.8" fill="#8ab8ec"/>
<rect x="8" y="505.5" width="6.5" height="0.8" fill="#c0c0c0"/>
<rect x="16" y="506" width="3" height="13" fill="#e4e4e4"/>
<rect x="19.5" y="511" width="2" height="2" fill="#d0d0d0"/>
<rect x="16" y="515" width="6" height="4" fill="#d8d8d8"/>
<rect x="27" y="506" width="3" height="13" fill="#e4e4e4"/>
<rect x="30.5" y="511" width="2" height="2" fill="#d0d0d0"/>
<rect x="27" y="515" width="6" height="4" fill="#d8d8d8"/>
<rect x="0" y="526" width="999" height="9" fill="#e2e7f2"/>
<text transform="translate(4,533.6) scale(0.91,1)" font-size="8.14" fill="#2f4c80" stroke="#2f4c80" stroke-width="0.16" text-anchor="start">Dist Report Column 1</text>
<line x1="954" y1="525" x2="954" y2="535" stroke="#b0b8c8" stroke-width="0.8"/>
<path d="M956.6 531.5 L960.2 527.9 L963.8 531.5" fill="none" stroke="#2a8ad8" stroke-width="1.1"/>
<path d="M957.8 530.7 V535 H962.6 V530.7 L960.2 528.5 Z" fill="#f4f8fc" stroke="#4a9ae0" stroke-width="0.6"/>
<rect x="959.6" y="532.3" width="1.4" height="2.7" fill="#a07020"/>
<rect x="970.8" y="527.8" width="7.6" height="8" fill="#eeeeee" stroke="#a8a8a8" stroke-width="0.7"/>
<path d="M981.8 529.9 L987.2 529.9 L984.5 533.6 Z" fill="#111"/>
</svg></body></html>
